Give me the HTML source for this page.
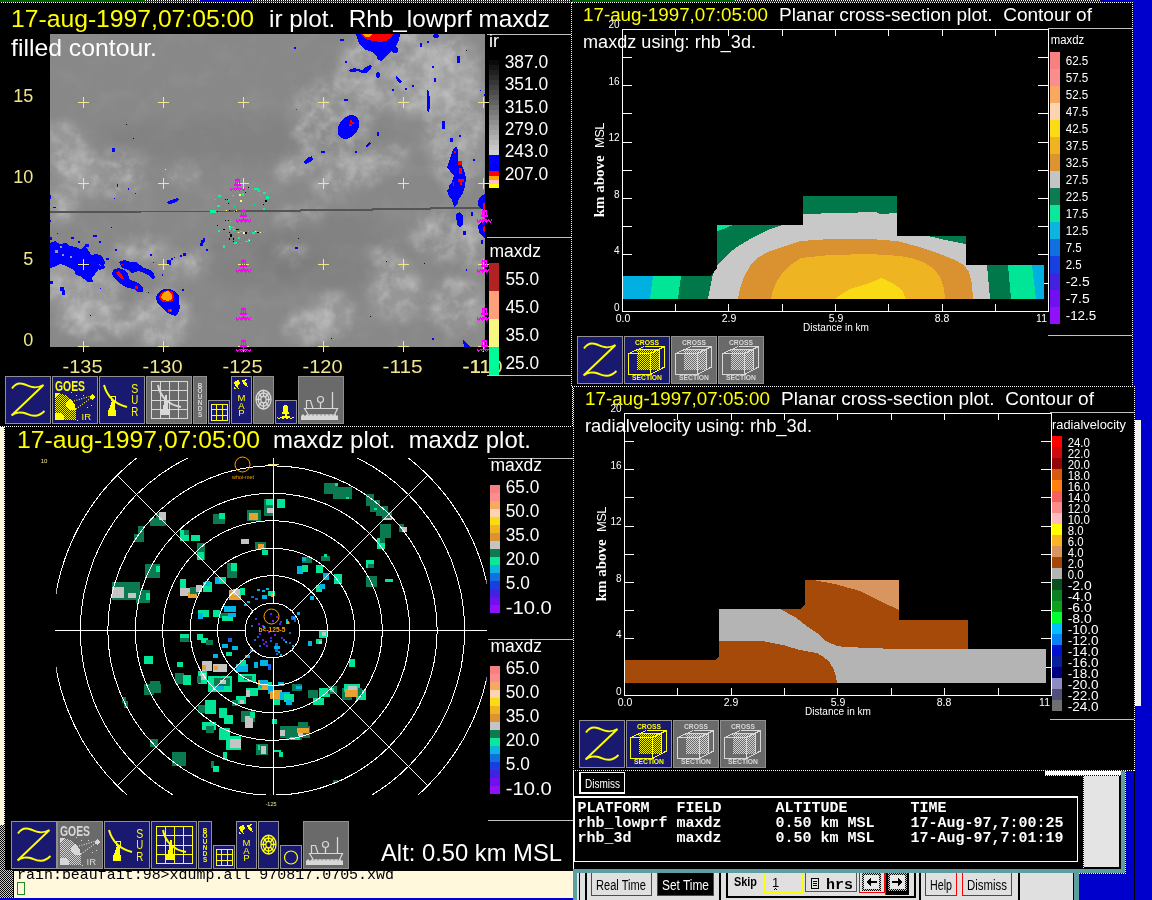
<!DOCTYPE html>
<html lang="en"><head><meta charset="utf-8"><title>zeb display 17-aug-1997</title>
<style>html,body{margin:0;padding:0;background:#000;overflow:hidden;width:1152px;height:900px}svg{display:block;will-change:transform}text{font-family:"Liberation Sans",sans-serif;white-space:pre}</style></head><body>
<svg width="1152" height="900" viewBox="0 0 1152 900" shape-rendering="crispEdges">
<defs>
<filter id="bl6" color-interpolation-filters="sRGB" filterUnits="userSpaceOnUse" x="0" y="0" width="600" height="400"><feGaussianBlur stdDeviation="6"/></filter>
<filter id="bl3" color-interpolation-filters="sRGB" x="-30%" y="-30%" width="160%" height="160%"><feGaussianBlur stdDeviation="3"/></filter>
<filter id="tex" x="0" y="0" width="100%" height="100%"><feTurbulence type="fractalNoise" baseFrequency="0.045" numOctaves="4" seed="11" result="n"/><feColorMatrix type="matrix" values="0 0 0 0 1  0 0 0 0 1  0 0 0 0 1  1.6 0 0 0 -0.62"/></filter>
<filter id="tex2" x="0" y="0" width="100%" height="100%"><feTurbulence type="fractalNoise" baseFrequency="0.09" numOctaves="3" seed="5" result="n"/><feColorMatrix type="matrix" values="0 0 0 0 1  0 0 0 0 1  0 0 0 0 1  2.2 0 0 0 -0.95"/></filter>
<clipPath id="cir"><rect x="50" y="34" width="435" height="313"/></clipPath>
<clipPath id="crad"><rect x="56.300" y="458" width="430.200" height="337"/></clipPath>
<pattern id="stip" width="2" height="2" patternUnits="userSpaceOnUse"><rect width="2" height="2" fill="#c8c8c8"/><rect width="1" height="1" fill="#000"/><rect x="1" y="1" width="1" height="1" fill="#000"/></pattern>
<pattern id="stipy" width="2" height="2" patternUnits="userSpaceOnUse"><rect width="1" height="1" fill="#ff0"/><rect x="1" y="1" width="1" height="1" fill="#ff0"/></pattern>
<pattern id="stipg" width="2" height="2" patternUnits="userSpaceOnUse"><rect width="1" height="1" fill="#d3d3d3"/><rect x="1" y="1" width="1" height="1" fill="#d3d3d3"/></pattern>
</defs>
<rect x="0" y="0" width="1152" height="900" fill="#000" />
<rect x="1133" y="0" width="19" height="386" fill="#0000cd" />
<rect x="1135" y="386" width="17" height="514" fill="#0000cd" />
<rect x="1101" y="0" width="51" height="3" fill="#0000cd" />
<rect x="0" y="0" width="571" height="2" fill="#006400" />
<rect x="145" y="0" width="426" height="1" fill="#000" />
<line x1="145" y1="0.5" x2="571" y2="0.5" stroke="#fff" stroke-width="1" stroke-dasharray="1 1"/>
<rect x="200" y="0" width="52" height="2" fill="#0000cd" />
<line x1="1" y1="2.5" x2="572" y2="2.5" stroke="#fff" stroke-width="1" stroke-dasharray="1 1"/>
<line x1="571.5" y1="3" x2="571.5" y2="386" stroke="#fff" stroke-width="1" stroke-dasharray="1 1"/>
<text x="11" y="27" font-size="24.5" fill="#ff0" textLength="243" lengthAdjust="spacingAndGlyphs" >17-aug-1997,07:05:00</text>
<text x="269" y="27" font-size="24.5" fill="#fff" textLength="281" lengthAdjust="spacingAndGlyphs" >ir plot.  Rhb_lowprf maxdz</text>
<rect x="50" y="34" width="435" height="313" fill="#888888" />
<g clip-path="url(#cir)">
<g filter="url(#bl6)" shape-rendering="auto">
<ellipse cx="260" cy="260" rx="60" ry="30" fill="#000" opacity="0.044" transform="rotate(0 260 260)"/>
<ellipse cx="240" cy="140" rx="150" ry="22" fill="#000" opacity="0.039" transform="rotate(0 240 140)"/>
<ellipse cx="305" cy="328" rx="22" ry="16" fill="#fff" opacity="0.121" transform="rotate(0 305 328)"/>
<ellipse cx="330" cy="250" rx="70" ry="40" fill="#000" opacity="0.044" transform="rotate(0 330 250)"/>
<ellipse cx="72" cy="160" rx="22" ry="40" fill="#fff" opacity="0.132" transform="rotate(-25 72 160)"/>
<ellipse cx="60" cy="205" rx="14" ry="20" fill="#fff" opacity="0.138" transform="rotate(0 60 205)"/>
<ellipse cx="120" cy="175" rx="25" ry="25" fill="#fff" opacity="0.083" transform="rotate(0 120 175)"/>
<ellipse cx="185" cy="175" rx="14" ry="14" fill="#fff" opacity="0.083" transform="rotate(0 185 175)"/>
<ellipse cx="80" cy="290" rx="40" ry="28" fill="#fff" opacity="0.132" transform="rotate(20 80 290)"/>
<ellipse cx="95" cy="320" rx="40" ry="20" fill="#fff" opacity="0.099" transform="rotate(0 95 320)"/>
<ellipse cx="160" cy="320" rx="28" ry="28" fill="#fff" opacity="0.165" transform="rotate(0 160 320)"/>
<ellipse cx="185" cy="265" rx="25" ry="12" fill="#fff" opacity="0.099" transform="rotate(-20 185 265)"/>
<ellipse cx="140" cy="250" rx="25" ry="14" fill="#fff" opacity="0.083" transform="rotate(0 140 250)"/>
<ellipse cx="410" cy="70" rx="70" ry="45" fill="#fff" opacity="0.121" transform="rotate(0 410 70)"/>
<ellipse cx="428" cy="85" rx="7" ry="35" fill="#fff" opacity="0.165" transform="rotate(5 428 85)"/>
<ellipse cx="330" cy="120" rx="40" ry="40" fill="#fff" opacity="0.077" transform="rotate(0 330 120)"/>
<ellipse cx="455" cy="120" rx="30" ry="70" fill="#fff" opacity="0.121" transform="rotate(0 455 120)"/>
<ellipse cx="360" cy="170" rx="50" ry="18" fill="#fff" opacity="0.099" transform="rotate(-25 360 170)"/>
<ellipse cx="300" cy="165" rx="25" ry="12" fill="#fff" opacity="0.138" transform="rotate(-25 300 165)"/>
<ellipse cx="395" cy="290" rx="25" ry="32" fill="#fff" opacity="0.121" transform="rotate(-20 395 290)"/>
<ellipse cx="455" cy="305" rx="28" ry="28" fill="#fff" opacity="0.099" transform="rotate(0 455 305)"/>
<ellipse cx="330" cy="315" rx="25" ry="22" fill="#fff" opacity="0.121" transform="rotate(0 330 315)"/>
<ellipse cx="385" cy="255" rx="14" ry="10" fill="#fff" opacity="0.138" transform="rotate(0 385 255)"/>
<ellipse cx="300" cy="215" rx="25" ry="8" fill="#fff" opacity="0.110" transform="rotate(-15 300 215)"/>
<ellipse cx="290" cy="252" rx="18" ry="8" fill="#fff" opacity="0.110" transform="rotate(0 290 252)"/>
<ellipse cx="440" cy="235" rx="30" ry="25" fill="#fff" opacity="0.066" transform="rotate(0 440 235)"/>
<ellipse cx="470" cy="240" rx="15" ry="30" fill="#fff" opacity="0.083" transform="rotate(0 470 240)"/>
</g>
<mask id="mcl" maskUnits="userSpaceOnUse" x="50" y="34" width="435" height="313"><rect x="50" y="34" width="435" height="313" fill="#000"/><g filter="url(#bl6)" shape-rendering="auto">
<ellipse cx="305" cy="328" rx="22" ry="16" fill="#fff" transform="rotate(0 305 328)"/>
<ellipse cx="72" cy="160" rx="22" ry="40" fill="#fff" transform="rotate(-25 72 160)"/>
<ellipse cx="60" cy="205" rx="14" ry="20" fill="#fff" transform="rotate(0 60 205)"/>
<ellipse cx="120" cy="175" rx="25" ry="25" fill="#fff" transform="rotate(0 120 175)"/>
<ellipse cx="185" cy="175" rx="14" ry="14" fill="#fff" transform="rotate(0 185 175)"/>
<ellipse cx="80" cy="290" rx="40" ry="28" fill="#fff" transform="rotate(20 80 290)"/>
<ellipse cx="95" cy="320" rx="40" ry="20" fill="#fff" transform="rotate(0 95 320)"/>
<ellipse cx="160" cy="320" rx="28" ry="28" fill="#fff" transform="rotate(0 160 320)"/>
<ellipse cx="185" cy="265" rx="25" ry="12" fill="#fff" transform="rotate(-20 185 265)"/>
<ellipse cx="140" cy="250" rx="25" ry="14" fill="#fff" transform="rotate(0 140 250)"/>
<ellipse cx="410" cy="70" rx="70" ry="45" fill="#fff" transform="rotate(0 410 70)"/>
<ellipse cx="428" cy="85" rx="7" ry="35" fill="#fff" transform="rotate(5 428 85)"/>
<ellipse cx="330" cy="120" rx="40" ry="40" fill="#fff" transform="rotate(0 330 120)"/>
<ellipse cx="455" cy="120" rx="30" ry="70" fill="#fff" transform="rotate(0 455 120)"/>
<ellipse cx="360" cy="170" rx="50" ry="18" fill="#fff" transform="rotate(-25 360 170)"/>
<ellipse cx="300" cy="165" rx="25" ry="12" fill="#fff" transform="rotate(-25 300 165)"/>
<ellipse cx="395" cy="290" rx="25" ry="32" fill="#fff" transform="rotate(-20 395 290)"/>
<ellipse cx="455" cy="305" rx="28" ry="28" fill="#fff" transform="rotate(0 455 305)"/>
<ellipse cx="330" cy="315" rx="25" ry="22" fill="#fff" transform="rotate(0 330 315)"/>
<ellipse cx="385" cy="255" rx="14" ry="10" fill="#fff" transform="rotate(0 385 255)"/>
<ellipse cx="300" cy="215" rx="25" ry="8" fill="#fff" transform="rotate(-15 300 215)"/>
<ellipse cx="290" cy="252" rx="18" ry="8" fill="#fff" transform="rotate(0 290 252)"/>
<ellipse cx="440" cy="235" rx="30" ry="25" fill="#fff" transform="rotate(0 440 235)"/>
<ellipse cx="470" cy="240" rx="15" ry="30" fill="#fff" transform="rotate(0 470 240)"/>
</g></mask>
<g mask="url(#mcl)" shape-rendering="auto"><rect x="50" y="34" width="435" height="313" fill="#fff" filter="url(#tex)" opacity="0.28"/>
<rect x="50" y="34" width="435" height="313" fill="#fff" filter="url(#tex2)" opacity="0.22"/></g>
<rect x="50" y="34" width="435" height="313" fill="#fff" filter="url(#tex)" opacity="0.06"/>
<polyline points="50,212 140,212 141,211.500 230,211.500 231,211 300,211 301,210 372,210 373,209 430,209 431,208 485,208" fill="none" stroke="#555555" stroke-width="1.500"/>
<polygon points="356,34 400,34 399,40 396,46 392,50 388,54 384,58 381,61 378,60 376,55 372,52 366,50 361,46 358,41" fill="#0000ff"/>
<polygon points="361,34 393,34 391,38 386,41 380,42 374,41 368,40 364,38" fill="#ff0000"/>
<polygon points="363,34 372,34 370,37 365,37" fill="#ffa500"/>
<ellipse cx="395" cy="50" rx="3" ry="3" fill="#0000ff" transform="rotate(0 395 50)"/>
<ellipse cx="342" cy="40" rx="2" ry="1.5" fill="#0000ff" transform="rotate(0 342 40)"/>
<ellipse cx="295" cy="48" rx="1" ry="1" fill="#0000ff" transform="rotate(0 295 48)"/>
<ellipse cx="346" cy="62" rx="1.5" ry="1" fill="#0000ff" transform="rotate(0 346 62)"/>
<polygon points="349,70 354,68 358,69 362,70 366,67 370,65 372,66 370,70 366,73 362,73 358,71 353,72 350,72" fill="#0000ff"/>
<ellipse cx="378" cy="75" rx="2" ry="3" fill="#0000ff" transform="rotate(0 378 75)"/>
<polygon points="396,76 399,78 402,82 400,83 397,81" fill="#0000ff"/>
<ellipse cx="393" cy="90" rx="1" ry="1" fill="#0000ff" transform="rotate(0 393 90)"/>
<ellipse cx="406" cy="89" rx="1.5" ry="1" fill="#0000ff" transform="rotate(0 406 89)"/>
<ellipse cx="413" cy="86" rx="1.5" ry="1" fill="#0000ff" transform="rotate(0 413 86)"/>
<ellipse cx="346" cy="100" rx="2" ry="1" fill="#0000ff" transform="rotate(0 346 100)"/>
<polygon points="427,90 429,92 430,100 430,108 428,113 427,108 427,100" fill="#0000ff"/>
<ellipse cx="436" cy="36" rx="3" ry="2" fill="#0000ff" transform="rotate(0 436 36)"/>
<ellipse cx="421" cy="45" rx="1.5" ry="2" fill="#0000ff" transform="rotate(0 421 45)"/>
<ellipse cx="428" cy="42" rx="1.5" ry="1.5" fill="#0000ff" transform="rotate(0 428 42)"/>
<ellipse cx="433" cy="67" rx="1.5" ry="1.5" fill="#0000ff" transform="rotate(0 433 67)"/>
<ellipse cx="435" cy="80" rx="1" ry="2" fill="#0000ff" transform="rotate(0 435 80)"/>
<rect x="457" y="56" width="3" height="7" fill="#0000ff" />
<rect x="480" y="90" width="1" height="1" fill="#0000ff" />
<rect x="484" y="94" width="1" height="2" fill="#0000ff" />
<ellipse cx="348.5" cy="127" rx="9.5" ry="13" fill="#0000ff" transform="rotate(35 348.5 127)"/>
<rect x="350" y="120" width="2" height="3" fill="#ff0000" />
<rect x="352" y="122" width="2" height="2" fill="#ff0000" />
<rect x="349" y="124" width="3" height="2" fill="#ff0000" />
<polygon points="365,146 370,142 371,144 367,147" fill="#0000ff"/>
<ellipse cx="378" cy="134" rx="1" ry="2" fill="#0000ff" transform="rotate(0 378 134)"/>
<polygon points="303,162 307,158 312,156 313,159 310,162 306,164" fill="#0000ff"/>
<ellipse cx="323" cy="152" rx="2" ry="1.5" fill="#0000ff" transform="rotate(0 323 152)"/>
<ellipse cx="356" cy="152" rx="1" ry="1.5" fill="#0000ff" transform="rotate(0 356 152)"/>
<rect x="442" y="121" width="3" height="8" fill="#0000ff" />
<rect x="450" y="138" width="3" height="4" fill="#0000ff" />
<rect x="459" y="135" width="2" height="2" fill="#0000ff" />
<rect x="473" y="159" width="2" height="2" fill="#0000ff" />
<polygon points="453,149 456,146 458,150 458,160 461,164 464,170 466,178 465,186 463,193 460,198 457,200 452,198 448,193 449,186 452,182 454,176 450,171 447,168 449,162 451,156" fill="#0000ff"/>
<rect x="454" y="151" width="2" height="2" fill="#ff0000" />
<rect x="458" y="161" width="4" height="4" fill="#ff0000" />
<rect x="459" y="168" width="3" height="6" fill="#ff0000" />
<rect x="458" y="179" width="6" height="3" fill="#ff0000" />
<rect x="460" y="182" width="2" height="3" fill="#ff0000" />
<rect x="453" y="182" width="1" height="4" fill="#ff0000" />
<polygon points="447,190 452,189 456,193 459,197 458,204 454,207 452,200 449,196" fill="#0000ff"/>
<polygon points="456,214 460,212 463,216 463,224 460,228 457,225" fill="#0000ff"/>
<rect x="463" y="231" width="3" height="4" fill="#0000ff" />
<rect x="471" y="212" width="2" height="4" fill="#0000ff" />
<polygon points="485,194 481,196 478,201 478,206 481,209 485,210" fill="#0000ff"/>
<polygon points="485,220 481,222 478,226 479,232 482,236 485,238" fill="#0000ff"/>
<rect x="481" y="240" width="2" height="4" fill="#0000ff" />
<ellipse cx="484.5" cy="206" rx="2" ry="3.5" fill="#ff0000" transform="rotate(0 484.5 206)"/>
<ellipse cx="485" cy="229" rx="2" ry="3" fill="#ff0000" transform="rotate(0 485 229)"/>
<polygon points="463,340 466,342 470,347 464,347" fill="#0000ff"/>
<rect x="432" y="338" width="2" height="2" fill="#0000ff" />
<rect x="466" y="269" width="1" height="2" fill="#0000ff" />
<rect x="295" y="247" width="3" height="2" fill="#0000ff" />
<polygon points="166,203 171,200 177,198 179,199 176,202 170,204" fill="#0000ff"/>
<rect x="112" y="148" width="3" height="4" fill="#0000ff" />
<rect x="117" y="184" width="1" height="3" fill="#0000ff" />
<rect x="128" y="188" width="1" height="2" fill="#0000ff" />
<rect x="135" y="193" width="1" height="1" fill="#0000ff" />
<rect x="114" y="198" width="1" height="1" fill="#0000ff" />
<rect x="54" y="207" width="2" height="1" fill="#0000ff" />
<rect x="50" y="195" width="1" height="4" fill="#0000ff" />
<polygon points="50,243 55,241 60,244 66,243 70,246 76,247 82,250 88,254 90,258 92,262 96,265 98,270 95,274 92,277 93,282 88,282 84,279 80,276 76,275 74,270 70,268 66,266 60,264 56,266 50,268" fill="#0000ff"/>
<polygon points="80,250 84,246 88,250 92,256 96,262 100,266 104,264 105,268 100,270 94,268 88,260" fill="#0000ff"/>
<polygon points="88,256 96,254 102,256 105,262 104,266 98,264 92,262" fill="#0000ff"/>
<rect x="71" y="237" width="3" height="2" fill="#0000ff" />
<rect x="78" y="241" width="2" height="2" fill="#0000ff" />
<rect x="85" y="244" width="4" height="3" fill="#0000ff" />
<rect x="93" y="235" width="4" height="2" fill="#0000ff" />
<rect x="99" y="241" width="2" height="2" fill="#0000ff" />
<rect x="50" y="237" width="2" height="3" fill="#0000ff" />
<rect x="60" y="287" width="4" height="4" fill="#0000ff" />
<rect x="50" y="281" width="3" height="3" fill="#0000ff" />
<rect x="62" y="290" width="3" height="5" fill="#0000ff" />
<rect x="106" y="258" width="3" height="2" fill="#0000ff" />
<rect x="50" y="220" width="1" height="2" fill="#0000ff" />
<rect x="53" y="207" width="2" height="1" fill="#0000ff" />
<rect x="57" y="233" width="1" height="1" fill="#0000ff" />
<rect x="100" y="288" width="1" height="1" fill="#0000ff" />
<rect x="55" y="250" width="3" height="3" fill="#9a9a9a" />
<rect x="62" y="254" width="2" height="2" fill="#9a9a9a" />
<rect x="70" y="256" width="2" height="2" fill="#9a9a9a" />
<rect x="60" y="246" width="2" height="2" fill="#9a9a9a" />
<polygon points="119,262 124,260 130,262 136,262 140,265 144,268 150,270 154,274 155,278 152,279 148,275 144,273 138,271 132,273 128,270 122,268" fill="#0000ff"/>
<polygon points="113,270 118,268 124,270 128,274 130,280 136,282 140,284 143,288 143,292 138,292 134,289 128,288 124,286 118,282 114,278 112,274" fill="#0000ff"/>
<polygon points="116,272 119,271 122,275 124,279 121,279 118,276" fill="#ff0000"/>
<rect x="135" y="286" width="3" height="3" fill="#ff0000" />
<rect x="121" y="264" width="2" height="1" fill="#ff0000" />
<polygon points="156,297 159,292 164,289 170,289 176,292 179,296 179,302 180,308 178,313 176,316 172,315 168,313 164,310 160,306 157,302" fill="#0000ff"/>
<polygon points="159,297 162,292 168,290 173,292 174,297 172,302 167,302 162,302" fill="#ff0000"/>
<polygon points="161,297 164,292 168,291 172,294 172,299 168,301 163,300" fill="#ffa500"/>
<rect x="168" y="309" width="4" height="3" fill="#ff0000" />
<rect x="170" y="310" width="1" height="1" fill="#ffa500" />
<rect x="182" y="289" width="2" height="2" fill="#0000ff" />
<rect x="201" y="240" width="3" height="3" fill="#0000ff" />
<rect x="203" y="238" width="2" height="4" fill="#0000ff" />
<rect x="200" y="243" width="3" height="3" fill="#0000ff" />
<rect x="206" y="249" width="2" height="2" fill="#0000ff" />
<rect x="183" y="253" width="3" height="3" fill="#0000ff" />
<rect x="180" y="255" width="2" height="2" fill="#0000ff" />
<rect x="167" y="260" width="4" height="5" fill="#0000ff" />
<rect x="171" y="258" width="2" height="2" fill="#0000ff" />
<rect x="150" y="254" width="2" height="2" fill="#0000ff" />
<rect x="153" y="262" width="1" height="1" fill="#0000ff" />
<rect x="162" y="274" width="1" height="2" fill="#0000ff" />
<rect x="115" y="249" width="2" height="2" fill="#0000ff" />
<rect x="174" y="257" width="1" height="1" fill="#0000ff" />
<rect x="126" y="124" width="1" height="1" fill="#111" />
<rect x="133" y="138" width="1" height="1" fill="#111" />
<rect x="90" y="315" width="1" height="1" fill="#111" />
<rect x="148" y="292" width="1" height="1" fill="#111" />
<rect x="111" y="227" width="1" height="1" fill="#111" />
<rect x="466" y="50" width="1" height="1" fill="#111" />
<rect x="386" y="261" width="1" height="1" fill="#111" />
<rect x="424" y="263" width="1" height="1" fill="#111" />
<rect x="370" y="316" width="1" height="1" fill="#111" />
<rect x="331" y="338" width="1" height="1" fill="#111" />
<rect x="298" y="238" width="1" height="1" fill="#111" />
<rect x="296" y="109" width="1" height="1" fill="#ff0000" />
<rect x="165" y="169" width="1" height="1" fill="#ff0" />
<rect x="218" y="195" width="3" height="2" fill="#00fa9a" />
<rect x="232" y="195" width="2" height="1" fill="#00fa9a" />
<rect x="242" y="193" width="2" height="3" fill="#00fa9a" />
<rect x="239" y="194" width="2" height="2" fill="#00fa9a" />
<rect x="215" y="199" width="1" height="1" fill="#00fa9a" />
<rect x="217" y="205" width="3" height="2" fill="#00fa9a" />
<rect x="210" y="210" width="6" height="3" fill="#00fa9a" />
<rect x="225" y="210" width="2" height="1" fill="#00fa9a" />
<rect x="234" y="211" width="2" height="1" fill="#00fa9a" />
<rect x="254" y="188" width="5" height="2" fill="#00fa9a" />
<rect x="258" y="190" width="2" height="2" fill="#00fa9a" />
<rect x="263" y="192" width="3" height="2" fill="#00fa9a" />
<rect x="266" y="196" width="3" height="3" fill="#00fa9a" />
<rect x="270" y="197" width="1" height="1" fill="#00fa9a" />
<rect x="254" y="204" width="1" height="1" fill="#00fa9a" />
<rect x="263" y="208" width="2" height="2" fill="#00fa9a" />
<rect x="234" y="206" width="1" height="1" fill="#00fa9a" />
<rect x="228" y="199" width="1" height="2" fill="#00fa9a" />
<rect x="230" y="221" width="1" height="1" fill="#00fa9a" />
<rect x="229" y="226" width="2" height="4" fill="#00fa9a" />
<rect x="231" y="227" width="3" height="1" fill="#00fa9a" />
<rect x="233" y="229" width="2" height="2" fill="#00fa9a" />
<rect x="218" y="230" width="2" height="2" fill="#00fa9a" />
<rect x="237" y="232" width="3" height="1" fill="#00fa9a" />
<rect x="240" y="231" width="3" height="1" fill="#00fa9a" />
<rect x="248" y="231" width="1" height="1" fill="#00fa9a" />
<rect x="252" y="232" width="3" height="2" fill="#00fa9a" />
<rect x="256" y="231" width="2" height="1" fill="#00fa9a" />
<rect x="259" y="232" width="2" height="1" fill="#00fa9a" />
<rect x="238" y="237" width="2" height="2" fill="#00fa9a" />
<rect x="245" y="241" width="4" height="1" fill="#00fa9a" />
<rect x="248" y="239" width="2" height="2" fill="#00fa9a" />
<rect x="234" y="242" width="3" height="2" fill="#00fa9a" />
<rect x="223" y="245" width="2" height="3" fill="#00fa9a" />
<rect x="241" y="243" width="1" height="1" fill="#00fa9a" />
<rect x="228" y="235" width="1" height="1" fill="#00fa9a" />
<rect x="260" y="195" width="1" height="1" fill="#00fa9a" />
<rect x="225" y="199" width="1" height="1" fill="#000" />
<rect x="227" y="199" width="1" height="1" fill="#000" />
<rect x="228" y="203" width="1" height="1" fill="#000" />
<rect x="217" y="211" width="1" height="1" fill="#000" />
<rect x="229" y="210" width="1" height="1" fill="#000" />
<rect x="235" y="211" width="1" height="1" fill="#000" />
<rect x="245" y="192" width="1" height="1" fill="#000" />
<rect x="265" y="200" width="2" height="2" fill="#000" />
<rect x="263" y="204" width="1" height="1" fill="#000" />
<rect x="225" y="220" width="1" height="1" fill="#000" />
<rect x="228" y="220" width="1" height="1" fill="#000" />
<rect x="217" y="225" width="1" height="1" fill="#000" />
<rect x="223" y="229" width="2" height="1" fill="#000" />
<rect x="236" y="229" width="3" height="1" fill="#000" />
<rect x="245" y="232" width="2" height="2" fill="#000" />
<rect x="257" y="232" width="2" height="1" fill="#000" />
<rect x="229" y="232" width="1" height="1" fill="#000" />
<rect x="230" y="234" width="2" height="3" fill="#000" />
<rect x="233" y="238" width="1" height="2" fill="#000" />
<rect x="229" y="238" width="1" height="2" fill="#000" />
<rect x="233" y="241" width="1" height="1" fill="#000" />
<rect x="248" y="187" width="1" height="1" fill="#000" />
<rect x="239" y="194" width="2" height="2" fill="#ff6" />
<rect x="240" y="200" width="2" height="2" fill="#ff6" />
<rect x="226" y="210" width="1" height="1" fill="#ff6" />
<rect x="236" y="210" width="1" height="1" fill="#ff6" />
<rect x="229" y="226" width="1" height="1" fill="#ff6" />
<rect x="243" y="232" width="2" height="2" fill="#ff6" />
<rect x="238" y="232" width="1" height="1" fill="#ff6" />
<rect x="255" y="231" width="1" height="1" fill="#ff6" />
<rect x="260" y="232" width="1" height="1" fill="#ff6" />
<rect x="249" y="240" width="1" height="1" fill="#ff6" />
</g>
<path d="M78 346.5h11M83.5 341v11" stroke="#f0e68c" stroke-width="1" fill="none"/>
<path d="M78 264.5h11M83.5 259v11" stroke="#f0e68c" stroke-width="1" fill="none"/>
<path d="M78 183.5h11M83.5 178v11" stroke="#f0e68c" stroke-width="1" fill="none"/>
<path d="M78 102.5h11M83.5 97v11" stroke="#f0e68c" stroke-width="1" fill="none"/>
<path d="M158 346.5h11M163.5 341v11" stroke="#f0e68c" stroke-width="1" fill="none"/>
<path d="M158 264.5h11M163.5 259v11" stroke="#f0e68c" stroke-width="1" fill="none"/>
<path d="M158 183.5h11M163.5 178v11" stroke="#f0e68c" stroke-width="1" fill="none"/>
<path d="M158 102.5h11M163.5 97v11" stroke="#f0e68c" stroke-width="1" fill="none"/>
<path d="M238 346.5h11M243.5 341v11" stroke="#f0e68c" stroke-width="1" fill="none"/>
<path d="M238 264.5h11M243.5 259v11" stroke="#f0e68c" stroke-width="1" fill="none"/>
<path d="M238 183.5h11M243.5 178v11" stroke="#f0e68c" stroke-width="1" fill="none"/>
<path d="M238 102.5h11M243.5 97v11" stroke="#f0e68c" stroke-width="1" fill="none"/>
<path d="M318 346.5h11M323.5 341v11" stroke="#f0e68c" stroke-width="1" fill="none"/>
<path d="M318 264.5h11M323.5 259v11" stroke="#f0e68c" stroke-width="1" fill="none"/>
<path d="M318 183.5h11M323.5 178v11" stroke="#f0e68c" stroke-width="1" fill="none"/>
<path d="M318 102.5h11M323.5 97v11" stroke="#f0e68c" stroke-width="1" fill="none"/>
<path d="M398 346.5h11M403.5 341v11" stroke="#f0e68c" stroke-width="1" fill="none"/>
<path d="M398 264.5h11M403.5 259v11" stroke="#f0e68c" stroke-width="1" fill="none"/>
<path d="M398 183.5h11M403.5 178v11" stroke="#f0e68c" stroke-width="1" fill="none"/>
<path d="M398 102.5h11M403.5 97v11" stroke="#f0e68c" stroke-width="1" fill="none"/>
<path d="M478 346.5h11M483.5 341v11" stroke="#f0e68c" stroke-width="1" fill="none"/>
<path d="M478 264.5h11M483.5 259v11" stroke="#f0e68c" stroke-width="1" fill="none"/>
<path d="M478 183.5h11M483.5 178v11" stroke="#f0e68c" stroke-width="1" fill="none"/>
<path d="M478 102.5h11M483.5 97v11" stroke="#f0e68c" stroke-width="1" fill="none"/>
<symbol id="buoy" viewBox="0 0 16 14" width="16" height="14"><path d="M7.500 0h1v1h2v5h1v2h-3v2h2l1 1.500h-7l1-1.500h2v-2h-3V6h1V1h2z M6.500 3v3h1V3z M8.500 3v3h1V3z" fill="#ff00ff" fill-rule="evenodd"/><path d="M0.500 10.500l1.500 2.500 2-2 2 2 2-2 2 2 2-2 2 2 1.500-2.500" stroke="#ff00ff" stroke-width="1.200" fill="none"/></symbol>
<use href="#buoy" x="229.5" y="177.5"/>
<use href="#buoy" x="235.5" y="209"/>
<use href="#buoy" x="235.5" y="259"/>
<use href="#buoy" x="235.5" y="307"/>
<use href="#buoy" x="235.5" y="338.5"/>
<use href="#buoy" x="476.5" y="209"/>
<use href="#buoy" x="476.5" y="259"/>
<use href="#buoy" x="476.5" y="307"/>
<use href="#buoy" x="476.5" y="338.5"/>
<text x="33.3" y="346.3" font-size="18" fill="#f0e68c" text-anchor="end" >0</text>
<text x="33.3" y="264.8" font-size="18" fill="#f0e68c" text-anchor="end" >5</text>
<text x="33.3" y="183.3" font-size="18" fill="#f0e68c" text-anchor="end" >10</text>
<text x="33.3" y="101.8" font-size="18" fill="#f0e68c" text-anchor="end" >15</text>
<text x="82.5" y="372.5" font-size="18" fill="#f0e68c" text-anchor="middle" textLength="40" lengthAdjust="spacingAndGlyphs" >-135</text>
<text x="162.5" y="372.5" font-size="18" fill="#f0e68c" text-anchor="middle" textLength="40" lengthAdjust="spacingAndGlyphs" >-130</text>
<text x="242.5" y="372.5" font-size="18" fill="#f0e68c" text-anchor="middle" textLength="40" lengthAdjust="spacingAndGlyphs" >-125</text>
<text x="322.5" y="372.5" font-size="18" fill="#f0e68c" text-anchor="middle" textLength="40" lengthAdjust="spacingAndGlyphs" >-120</text>
<text x="402.5" y="372.5" font-size="18" fill="#f0e68c" text-anchor="middle" textLength="40" lengthAdjust="spacingAndGlyphs" >-115</text>
<text x="482.5" y="372.5" font-size="18" fill="#f0e68c" text-anchor="middle" textLength="40" lengthAdjust="spacingAndGlyphs" >-110</text>
<rect x="485" y="30" width="86" height="350" fill="#000" />
<text x="482.5" y="372.5" font-size="18" fill="#f0e68c" text-anchor="middle" textLength="40" lengthAdjust="spacingAndGlyphs" >-110</text>
<rect x="504" y="340" width="67" height="40" fill="#000" />
<path d="M478 346.5h11M483.500 341v11" stroke="#f0e68c" stroke-width="1" fill="none"/>
<path d="M478 264.5h11M483.500 259v11" stroke="#f0e68c" stroke-width="1" fill="none"/>
<path d="M478 183.5h11M483.500 178v11" stroke="#f0e68c" stroke-width="1" fill="none"/>
<path d="M478 102.5h11M483.500 97v11" stroke="#f0e68c" stroke-width="1" fill="none"/>
<use href="#buoy" x="476.5" y="209"/>
<use href="#buoy" x="476.5" y="259"/>
<use href="#buoy" x="476.5" y="307"/>
<use href="#buoy" x="476.5" y="338.5"/>
<line x1="487" y1="34.5" x2="571" y2="34.5" stroke="#c0c0c0" stroke-width="1" />
<text x="489" y="46.8" font-size="18" fill="#fff" >ir</text>
<linearGradient id="gir" x1="0" y1="0" x2="0" y2="1"><stop offset="0" stop-color="#000"/><stop offset="1" stop-color="#d2d2d2"/></linearGradient>
<rect x="489" y="60" width="10" height="5" fill="rgb(10,10,10)" />
<rect x="489" y="65" width="10" height="5" fill="rgb(21,21,21)" />
<rect x="489" y="70" width="10" height="5" fill="rgb(32,32,32)" />
<rect x="489" y="75" width="10" height="5" fill="rgb(43,43,43)" />
<rect x="489" y="80" width="10" height="5" fill="rgb(54,54,54)" />
<rect x="489" y="85" width="10" height="5" fill="rgb(65,65,65)" />
<rect x="489" y="90" width="10" height="5" fill="rgb(76,76,76)" />
<rect x="489" y="95" width="10" height="5" fill="rgb(87,87,87)" />
<rect x="489" y="100" width="10" height="5" fill="rgb(98,98,98)" />
<rect x="489" y="105" width="10" height="5" fill="rgb(110,110,110)" />
<rect x="489" y="110" width="10" height="5" fill="rgb(121,121,121)" />
<rect x="489" y="115" width="10" height="5" fill="rgb(132,132,132)" />
<rect x="489" y="120" width="10" height="5" fill="rgb(143,143,143)" />
<rect x="489" y="125" width="10" height="5" fill="rgb(154,154,154)" />
<rect x="489" y="130" width="10" height="5" fill="rgb(165,165,165)" />
<rect x="489" y="135" width="10" height="5" fill="rgb(176,176,176)" />
<rect x="489" y="140" width="10" height="5" fill="rgb(187,187,187)" />
<rect x="489" y="145" width="10" height="5" fill="rgb(198,198,198)" />
<rect x="489" y="150" width="10" height="5" fill="rgb(210,210,210)" />
<rect x="489" y="155" width="10" height="16" fill="#0000ff" />
<rect x="489" y="171" width="10" height="5" fill="#ff0000" />
<rect x="489" y="176" width="10" height="4" fill="#ffa500" />
<rect x="489" y="180" width="10" height="4" fill="#ffc0cb" />
<rect x="489" y="184" width="10" height="4" fill="#ffff00" />
<text x="504.7" y="68" font-size="18" fill="#fff" textLength="43.5" lengthAdjust="spacingAndGlyphs" >387.0</text>
<text x="504.7" y="90.3" font-size="18" fill="#fff" textLength="43.5" lengthAdjust="spacingAndGlyphs" >351.0</text>
<text x="504.7" y="112.6" font-size="18" fill="#fff" textLength="43.5" lengthAdjust="spacingAndGlyphs" >315.0</text>
<text x="504.7" y="134.9" font-size="18" fill="#fff" textLength="43.5" lengthAdjust="spacingAndGlyphs" >279.0</text>
<text x="504.7" y="157.2" font-size="18" fill="#fff" textLength="43.5" lengthAdjust="spacingAndGlyphs" >243.0</text>
<text x="504.7" y="179.5" font-size="18" fill="#fff" textLength="43.5" lengthAdjust="spacingAndGlyphs" >207.0</text>
<line x1="487" y1="237.5" x2="571" y2="237.5" stroke="#c0c0c0" stroke-width="1" />
<text x="489.5" y="257" font-size="18" fill="#fff" textLength="51.5" lengthAdjust="spacingAndGlyphs" >maxdz</text>
<rect x="489" y="263" width="10" height="28" fill="#b22222" />
<rect x="489" y="291" width="10" height="28" fill="#ffa07a" />
<rect x="489" y="319" width="10" height="28" fill="#f7f781" />
<rect x="489" y="347" width="10" height="28" fill="#00fa9a" />
<text x="505.5" y="284.5" font-size="18" fill="#fff" textLength="33.5" lengthAdjust="spacingAndGlyphs" >55.0</text>
<text x="505.5" y="312.5" font-size="18" fill="#fff" textLength="33.5" lengthAdjust="spacingAndGlyphs" >45.0</text>
<text x="505.5" y="340.5" font-size="18" fill="#fff" textLength="33.5" lengthAdjust="spacingAndGlyphs" >35.0</text>
<text x="505.5" y="368.5" font-size="18" fill="#fff" textLength="33.5" lengthAdjust="spacingAndGlyphs" >25.0</text>
<line x1="487" y1="375.5" x2="571" y2="375.5" stroke="#c0c0c0" stroke-width="1" />
<text x="11" y="56" font-size="24.5" fill="#fff" textLength="146" lengthAdjust="spacingAndGlyphs" >filled contour.</text>
<line x1="0" y1="426.5" x2="571" y2="426.5" stroke="#fff" stroke-width="1" stroke-dasharray="1 1"/>
<rect x="0" y="427" width="4" height="398" fill="#fff8dc" />
<line x1="4.5" y1="427" x2="4.5" y2="870" stroke="#fff" stroke-width="1" stroke-dasharray="1 1"/>
<rect x="0" y="825" width="5" height="75" fill="url(#stip)" />
<text x="17" y="447.5" font-size="24.5" fill="#ff0" textLength="243" lengthAdjust="spacingAndGlyphs" >17-aug-1997,07:05:00</text>
<text x="273" y="447.5" font-size="24.5" fill="#fff" textLength="258" lengthAdjust="spacingAndGlyphs" >maxdz plot.  maxdz plot.</text>
<g clip-path="url(#crad)">
<rect x="156" y="513" width="10" height="13" fill="#0b7a50" />
<rect x="159" y="512" width="7" height="8" fill="#c4c4c4" />
<rect x="150" y="518" width="8" height="8" fill="#0b7a50" />
<rect x="138" y="526" width="6" height="16" fill="#0b7a50" />
<rect x="134" y="534" width="6" height="8" fill="#0b7a50" />
<rect x="145" y="564" width="15" height="14" fill="#0b7a50" />
<rect x="156" y="566" width="4" height="6" fill="#00e696" />
<rect x="112" y="582" width="28" height="18" fill="#0b7a50" />
<rect x="112" y="587" width="12" height="11" fill="#c4c4c4" />
<rect x="128" y="593" width="9" height="5" fill="#c4c4c4" />
<rect x="136" y="590" width="14" height="13" fill="#0b7a50" />
<rect x="146" y="593" width="4" height="7" fill="#00e696" />
<rect x="180" y="530" width="9" height="11" fill="#00e696" />
<rect x="184" y="530" width="5" height="5" fill="#0b7a50" />
<rect x="191" y="535" width="9" height="6" fill="#00e696" />
<rect x="197" y="543" width="8" height="17" fill="#0b7a50" />
<rect x="197" y="552" width="7" height="8" fill="#00e696" />
<rect x="213" y="514" width="12" height="10" fill="#0b7a50" />
<rect x="219" y="513" width="6" height="6" fill="#00e696" />
<rect x="247" y="510" width="14" height="11" fill="#0b7a50" />
<rect x="249" y="513" width="9" height="7" fill="#e8a030" />
<rect x="264" y="499" width="9" height="17" fill="#0b7a50" />
<rect x="266" y="499" width="7" height="6" fill="#00e696" />
<rect x="267" y="508" width="6" height="5" fill="#c4c4c4" />
<rect x="277" y="499" width="8" height="9" fill="#00e696" />
<rect x="241" y="539" width="8" height="5" fill="#c4c4c4" />
<rect x="255" y="542" width="11" height="8" fill="#0b7a50" />
<rect x="258" y="544" width="6" height="5" fill="#e8a030" />
<rect x="262" y="550" width="6" height="5" fill="#00e696" />
<rect x="227" y="563" width="10" height="15" fill="#0b7a50" />
<rect x="231" y="563" width="6" height="8" fill="#00e696" />
<rect x="180" y="579" width="6" height="17" fill="#00e696" />
<rect x="180" y="588" width="12" height="8" fill="#c4c4c4" />
<rect x="188" y="592" width="9" height="6" fill="#e8a030" />
<rect x="190" y="587" width="10" height="7" fill="#0b7a50" />
<rect x="196" y="585" width="6" height="7" fill="#c4c4c4" />
<rect x="203" y="582" width="9" height="10" fill="#00e696" />
<rect x="205" y="581" width="5" height="5" fill="#00b4e6" />
<rect x="215" y="577" width="11" height="7" fill="#00b4e6" />
<rect x="219" y="577" width="7" height="6" fill="#00e696" />
<rect x="229" y="590" width="12" height="10" fill="#e8a030" />
<rect x="233" y="589" width="7" height="6" fill="#c4c4c4" />
<rect x="240" y="588" width="5" height="7" fill="#00e696" />
<rect x="198" y="610" width="11" height="7" fill="#00e696" />
<rect x="198" y="613" width="5" height="6" fill="#00b4e6" />
<rect x="213" y="610" width="7" height="7" fill="#00e696" />
<rect x="220" y="613" width="8" height="5" fill="#0b7a50" />
<rect x="224" y="606" width="12" height="6" fill="#00b4e6" />
<rect x="222" y="616" width="11" height="5" fill="#00e696" />
<rect x="228" y="613" width="8" height="4" fill="#00b4e6" />
<rect x="268" y="591" width="7" height="5" fill="#00e696" />
<rect x="271" y="593" width="3" height="4" fill="#e8a030" />
<rect x="262" y="595" width="5" height="4" fill="#00b4e6" />
<rect x="251" y="596" width="3" height="2" fill="#1464e6" />
<rect x="255" y="598" width="3" height="2" fill="#1464e6" />
<rect x="262" y="590" width="3" height="2" fill="#00b4e6" />
<rect x="244" y="604" width="3" height="2" fill="#00b4e6" />
<rect x="257" y="589" width="3" height="2" fill="#00b4e6" />
<rect x="266" y="588" width="3" height="2" fill="#00b4e6" />
<rect x="247" y="601" width="3" height="2" fill="#00b4e6" />
<rect x="324" y="483" width="14" height="11" fill="#0b7a50" />
<rect x="333" y="487" width="19" height="12" fill="#0b7a50" />
<rect x="335" y="483" width="3" height="3" fill="#00e696" />
<rect x="346" y="497" width="3" height="2" fill="#00e696" />
<rect x="366" y="494" width="8" height="12" fill="#0b7a50" />
<rect x="370" y="500" width="10" height="12" fill="#0b7a50" />
<rect x="376" y="506" width="12" height="10" fill="#0b7a50" />
<rect x="382" y="512" width="10" height="8" fill="#0b7a50" />
<rect x="374" y="508" width="3" height="2" fill="#00e696" />
<rect x="384" y="518" width="8" height="2" fill="#c4c4c4" />
<rect x="380" y="524" width="11" height="14" fill="#0b7a50" />
<rect x="377" y="538" width="8" height="11" fill="#00e696" />
<rect x="380" y="538" width="5" height="5" fill="#0b7a50" />
<rect x="399" y="524" width="5" height="8" fill="#0b7a50" />
<rect x="402" y="527" width="5" height="5" fill="#c4c4c4" />
<rect x="366" y="560" width="8" height="8" fill="#00e696" />
<rect x="368" y="564" width="6" height="4" fill="#0b7a50" />
<rect x="366" y="576" width="11" height="11" fill="#0b7a50" />
<rect x="385" y="579" width="8" height="3" fill="#00e696" />
<rect x="321" y="556" width="9" height="5" fill="#0b7a50" />
<rect x="324" y="554" width="3" height="3" fill="#00e696" />
<rect x="302" y="557" width="10" height="6" fill="#0b7a50" />
<rect x="302" y="557" width="4" height="4" fill="#00b4e6" />
<rect x="297" y="566" width="6" height="8" fill="#00b4e6" />
<rect x="302" y="565" width="6" height="7" fill="#00e696" />
<rect x="316" y="565" width="7" height="8" fill="#00e696" />
<rect x="323" y="573" width="6" height="7" fill="#00b4e6" />
<rect x="334" y="574" width="8" height="10" fill="#00e696" />
<rect x="316" y="585" width="6" height="7" fill="#00e696" />
<rect x="320" y="584" width="5" height="5" fill="#00b4e6" />
<rect x="310" y="596" width="4" height="4" fill="#00b4e6" />
<rect x="319" y="631" width="8" height="7" fill="#00e696" />
<rect x="322" y="632" width="4" height="4" fill="#c4c4c4" />
<rect x="297" y="612" width="3" height="3" fill="#00b4e6" />
<rect x="291" y="616" width="5" height="4" fill="#1464e6" />
<rect x="180" y="634" width="9" height="4" fill="#00e696" />
<rect x="180" y="638" width="9" height="4" fill="#0b7a50" />
<rect x="197" y="634" width="6" height="6" fill="#00e696" />
<rect x="201" y="638" width="7" height="5" fill="#00e696" />
<rect x="206" y="640" width="7" height="5" fill="#0b7a50" />
<rect x="144" y="656" width="9" height="8" fill="#00e696" />
<rect x="177" y="662" width="6" height="5" fill="#00e696" />
<rect x="175" y="673" width="9" height="11" fill="#0b7a50" />
<rect x="183" y="675" width="8" height="10" fill="#00e696" />
<rect x="144" y="684" width="17" height="9" fill="#0b7a50" />
<rect x="150" y="681" width="10" height="5" fill="#0b7a50" />
<rect x="144" y="690" width="10" height="5" fill="#0b7a50" />
<rect x="122" y="697" width="4" height="6" fill="#0b7a50" />
<rect x="124" y="701" width="4" height="7" fill="#0b7a50" />
<rect x="202" y="661" width="10" height="10" fill="#c4c4c4" />
<rect x="202" y="665" width="4" height="5" fill="#e8a030" />
<rect x="213" y="664" width="14" height="8" fill="#c4c4c4" />
<rect x="214" y="666" width="4" height="4" fill="#e8a030" />
<rect x="198" y="671" width="9" height="13" fill="#00e696" />
<rect x="200" y="673" width="6" height="7" fill="#c4c4c4" />
<rect x="197" y="676" width="4" height="7" fill="#0b7a50" />
<rect x="208" y="676" width="24" height="16" fill="#00e696" />
<rect x="214" y="678" width="16" height="8" fill="#0b7a50" />
<rect x="220" y="680" width="6" height="4" fill="#c4c4c4" />
<rect x="216" y="686" width="8" height="4" fill="#00b4e6" />
<rect x="205" y="700" width="11" height="14" fill="#00e696" />
<rect x="198" y="705" width="7" height="8" fill="#0b7a50" />
<rect x="219" y="708" width="8" height="10" fill="#00e696" />
<rect x="224" y="715" width="9" height="9" fill="#00e696" />
<rect x="241" y="711" width="14" height="11" fill="#0b7a50" />
<rect x="245" y="716" width="8" height="12" fill="#c4c4c4" />
<rect x="250" y="712" width="5" height="6" fill="#00e696" />
<rect x="202" y="722" width="14" height="8" fill="#00e696" />
<rect x="206" y="726" width="8" height="7" fill="#0b7a50" />
<rect x="219" y="728" width="11" height="12" fill="#00e696" />
<rect x="226" y="736" width="15" height="14" fill="#00e696" />
<rect x="230" y="739" width="11" height="9" fill="#c4c4c4" />
<rect x="256" y="744" width="12" height="11" fill="#0b7a50" />
<rect x="258" y="745" width="6" height="5" fill="#00e696" />
<rect x="261" y="749" width="6" height="5" fill="#c4c4c4" />
<rect x="172" y="752" width="14" height="14" fill="#0b7a50" />
<rect x="150" y="739" width="8" height="8" fill="#0b7a50" />
<rect x="211" y="761" width="3" height="7" fill="#0b7a50" />
<rect x="213" y="766" width="6" height="6" fill="#00e696" />
<rect x="223" y="752" width="4" height="8" fill="#00e696" />
<rect x="236" y="664" width="12" height="8" fill="#00b4e6" />
<rect x="240" y="660" width="6" height="6" fill="#00e696" />
<rect x="254" y="662" width="4" height="6" fill="#00b4e6" />
<rect x="262" y="660" width="6" height="6" fill="#00b4e6" />
<rect x="238" y="674" width="18" height="8" fill="#00e696" />
<rect x="244" y="676" width="8" height="4" fill="#0b7a50" />
<rect x="258" y="682" width="14" height="8" fill="#00e696" />
<rect x="246" y="688" width="12" height="8" fill="#00e696" />
<rect x="246" y="690" width="4" height="7" fill="#c4c4c4" />
<rect x="262" y="684" width="6" height="6" fill="#c4c4c4" />
<rect x="258" y="680" width="8" height="5" fill="#e8a030" />
<rect x="236" y="696" width="10" height="8" fill="#00e696" />
<rect x="232" y="700" width="6" height="6" fill="#0b7a50" />
<rect x="240" y="700" width="4" height="4" fill="#c4c4c4" />
<rect x="268" y="686" width="6" height="8" fill="#00b4e6" />
<rect x="228" y="638" width="4" height="4" fill="#1464e6" />
<rect x="222" y="644" width="6" height="4" fill="#00b4e6" />
<rect x="232" y="646" width="6" height="4" fill="#00b4e6" />
<rect x="226" y="652" width="6" height="4" fill="#00e696" />
<rect x="213" y="654" width="5" height="4" fill="#00b4e6" />
<rect x="245" y="655" width="5" height="3" fill="#00b4e6" />
<rect x="250" y="649" width="4" height="3" fill="#1464e6" />
<rect x="316" y="639" width="6" height="5" fill="#00e696" />
<rect x="319" y="641" width="3" height="3" fill="#c4c4c4" />
<rect x="308" y="641" width="4" height="5" fill="#00b4e6" />
<rect x="349" y="659" width="6" height="8" fill="#00e696" />
<rect x="342" y="688" width="10" height="12" fill="#0b7a50" />
<rect x="344" y="684" width="16" height="8" fill="#00e696" />
<rect x="356" y="690" width="10" height="10" fill="#00e696" />
<rect x="358" y="688" width="4" height="8" fill="#0b7a50" />
<rect x="345" y="689" width="12" height="8" fill="#e8a030" />
<rect x="348" y="686" width="9" height="4" fill="#c4c4c4" />
<rect x="308" y="690" width="10" height="8" fill="#0b7a50" />
<rect x="319" y="688" width="11" height="9" fill="#00e696" />
<rect x="328" y="686" width="9" height="8" fill="#0b7a50" />
<rect x="313" y="698" width="11" height="7" fill="#00e696" />
<rect x="330" y="688" width="4" height="4" fill="#00e696" />
<rect x="292" y="684" width="10" height="7" fill="#0b7a50" />
<rect x="296" y="686" width="6" height="3" fill="#00b4e6" />
<rect x="270" y="691" width="12" height="8" fill="#e8a030" />
<rect x="274" y="690" width="8" height="4" fill="#e8a030" />
<rect x="280" y="692" width="10" height="8" fill="#00b4e6" />
<rect x="284" y="694" width="10" height="8" fill="#00e696" />
<rect x="274" y="699" width="6" height="6" fill="#00e696" />
<rect x="286" y="700" width="6" height="5" fill="#00b4e6" />
<rect x="260" y="680" width="8" height="8" fill="#00b4e6" />
<rect x="262" y="684" width="6" height="6" fill="#e8a030" />
<rect x="278" y="682" width="6" height="4" fill="#00b4e6" />
<rect x="272" y="719" width="5" height="5" fill="#00e696" />
<rect x="280" y="726" width="30" height="12" fill="#0b7a50" />
<rect x="298" y="722" width="10" height="8" fill="#0b7a50" />
<rect x="286" y="734" width="16" height="6" fill="#0b7a50" />
<rect x="297" y="728" width="12" height="5" fill="#e8a030" />
<rect x="280" y="730" width="5" height="6" fill="#c4c4c4" />
<rect x="298" y="733" width="5" height="3" fill="#c4c4c4" />
<rect x="290" y="737" width="10" height="3" fill="#00e696" />
<rect x="260" y="745" width="8" height="10" fill="#0b7a50" />
<rect x="261" y="746" width="5" height="8" fill="#c4c4c4" />
<rect x="274" y="750" width="7" height="2" fill="#00e696" />
<rect x="279" y="752" width="4" height="5" fill="#00e696" />
<rect x="333" y="780" width="5" height="3" fill="#0b7a50" />
<rect x="260" y="660" width="4" height="6" fill="#00b4e6" />
<rect x="268" y="664" width="3" height="6" fill="#1464e6" />
<rect x="251" y="610" width="2" height="2" fill="#1464e6" />
<rect x="255" y="618" width="2" height="2" fill="#5a1ee6" />
<rect x="258" y="623" width="2" height="2" fill="#5a1ee6" />
<rect x="251" y="625" width="2" height="2" fill="#1464e6" />
<rect x="262" y="625" width="2" height="2" fill="#8a14f0" />
<rect x="259" y="633" width="2" height="2" fill="#5a1ee6" />
<rect x="257" y="636" width="2" height="2" fill="#1464e6" />
<rect x="254" y="639" width="2" height="2" fill="#1464e6" />
<rect x="262" y="639" width="2" height="2" fill="#5a1ee6" />
<rect x="265" y="641" width="2" height="2" fill="#8a14f0" />
<rect x="270" y="637" width="2" height="2" fill="#5a1ee6" />
<rect x="270" y="640" width="2" height="2" fill="#1464e6" />
<rect x="263" y="643" width="2" height="2" fill="#5a1ee6" />
<rect x="259" y="645" width="2" height="2" fill="#1464e6" />
<rect x="266" y="645" width="2" height="2" fill="#5a1ee6" />
<rect x="281" y="637" width="2" height="2" fill="#5a1ee6" />
<rect x="283" y="639" width="2" height="2" fill="#1464e6" />
<rect x="285" y="641" width="2" height="2" fill="#00b4e6" />
<rect x="289" y="632" width="2" height="2" fill="#1464e6" />
<rect x="289" y="642" width="2" height="2" fill="#1464e6" />
<rect x="292" y="645" width="2" height="2" fill="#00b4e6" />
<rect x="279" y="623" width="2" height="2" fill="#8a14f0" />
<rect x="276" y="616" width="2" height="2" fill="#5a1ee6" />
<rect x="270" y="613" width="2" height="2" fill="#5a1ee6" />
<rect x="272" y="620" width="2" height="2" fill="#8a14f0" />
<rect x="274" y="634" width="2" height="2" fill="#8a14f0" />
<rect x="268" y="631" width="2" height="2" fill="#8a14f0" />
<rect x="280" y="621" width="2" height="2" fill="#5a1ee6" />
<rect x="276" y="644" width="2" height="2" fill="#1464e6" />
<rect x="277" y="647" width="2" height="2" fill="#00b4e6" />
<rect x="275" y="649" width="2" height="2" fill="#1464e6" />
<rect x="278" y="651" width="2" height="2" fill="#00b4e6" />
<rect x="276" y="653" width="2" height="2" fill="#1464e6" />
<rect x="280" y="654" width="2" height="2" fill="#00b4e6" />
<rect x="286" y="619" width="2" height="2" fill="#00b4e6" />
<rect x="288" y="622" width="2" height="2" fill="#1464e6" />
<rect x="293" y="617" width="2" height="2" fill="#00b4e6" />
<rect x="294" y="620" width="2" height="2" fill="#1464e6" />
<rect x="263" y="626" width="2" height="2" fill="#00b4e6" />
<rect x="275" y="643" width="3" height="9" fill="#1464e6" />
<rect x="274" y="646" width="6" height="3" fill="#00b4e6" />
<rect x="286" y="621" width="3" height="3" fill="#00e696" />
<rect x="287" y="622" width="2" height="2" fill="#e8a030" />
<g fill="none" stroke="#fff" stroke-width="1" shape-rendering="crispEdges">
<circle cx="272.5" cy="630.5" r="27.4"/>
<circle cx="272.5" cy="630.5" r="54.9"/>
<circle cx="272.5" cy="630.5" r="82.3"/>
<circle cx="272.5" cy="630.5" r="109.8"/>
<circle cx="272.5" cy="630.5" r="137.2"/>
<circle cx="272.5" cy="630.5" r="164.7"/>
<circle cx="272.5" cy="630.5" r="192.2"/>
<circle cx="272.5" cy="630.5" r="219.6"/>
</g>
<g stroke="#fff" stroke-width="1" shape-rendering="crispEdges">
<line x1="291.91" y1="649.91" x2="427.781" y2="785.781" stroke="#fff" stroke-width="1" />
<line x1="291.91" y1="611.09" x2="427.781" y2="475.219" stroke="#fff" stroke-width="1" />
<line x1="253.09" y1="649.91" x2="117.219" y2="785.781" stroke="#fff" stroke-width="1" />
<line x1="253.09" y1="611.09" x2="117.219" y2="475.219" stroke="#fff" stroke-width="1" />
</g>
</g>
<line x1="55" y1="630.5" x2="245.2" y2="630.5" stroke="#fff" stroke-width="1" />
<line x1="299.8" y1="630.5" x2="487" y2="630.5" stroke="#fff" stroke-width="1" />
<line x1="273.5" y1="458" x2="273.5" y2="603.2" stroke="#fff" stroke-width="1" />
<line x1="273.5" y1="657.8" x2="273.5" y2="795" stroke="#fff" stroke-width="1" />
<circle cx="242.500" cy="464.500" r="7.500" fill="none" stroke="#ffa500" stroke-width="1" shape-rendering="auto"/>
<text x="243" y="479" font-size="6" fill="#ffa500" text-anchor="middle" textLength="22" lengthAdjust="spacingAndGlyphs" >whoi-met</text>
<path d="M268 464.500h11M273.500 459v11" stroke="#f0e68c" stroke-width="1" fill="none"/>
<circle cx="271.500" cy="616.500" r="7.500" fill="none" stroke="#ffa500" stroke-width="1" shape-rendering="auto"/>
<text x="272" y="632" font-size="7" fill="#ffa500" text-anchor="middle" textLength="27" lengthAdjust="spacingAndGlyphs" font-weight="bold" >b&lt;-125-5</text>
<text x="44" y="463" font-size="6" fill="#f0e68c" text-anchor="middle" >10</text>
<text x="271" y="806" font-size="6" fill="#f0e68c" text-anchor="middle" textLength="11" lengthAdjust="spacingAndGlyphs" >-125</text>
<line x1="488" y1="458.5" x2="573" y2="458.5" stroke="#c0c0c0" stroke-width="1" />
<text x="490.5" y="470.8" font-size="18" fill="#fff" textLength="51.5" lengthAdjust="spacingAndGlyphs" >maxdz</text>
<rect x="490" y="485" width="10" height="8" fill="#f98080" />
<rect x="490" y="493" width="10" height="8" fill="#fb8c90" />
<rect x="490" y="501" width="10" height="8" fill="#f9a860" />
<rect x="490" y="509" width="10" height="8" fill="#fcd5b0" />
<rect x="490" y="517" width="10" height="8" fill="#fbdb14" />
<rect x="490" y="525" width="10" height="8" fill="#efb41f" />
<rect x="490" y="533" width="10" height="8" fill="#dc9330" />
<rect x="490" y="541" width="10" height="8" fill="#c4c4c4" />
<rect x="490" y="549" width="10" height="8" fill="#0e7a50" />
<rect x="490" y="557" width="10" height="8" fill="#0ce89a" />
<rect x="490" y="565" width="10" height="8" fill="#0db4e0" />
<rect x="490" y="573" width="10" height="8" fill="#1070e0" />
<rect x="490" y="581" width="10" height="8" fill="#1840e0" />
<rect x="490" y="589" width="10" height="8" fill="#4420e0" />
<rect x="490" y="597" width="10" height="8" fill="#7010f0" />
<rect x="490" y="605" width="10" height="8" fill="#9010f8" />
<text x="505.8" y="493" font-size="18" fill="#fff" textLength="33.5" lengthAdjust="spacingAndGlyphs" >65.0</text>
<text x="505.8" y="517.1" font-size="18" fill="#fff" textLength="33.5" lengthAdjust="spacingAndGlyphs" >50.0</text>
<text x="505.8" y="541.2" font-size="18" fill="#fff" textLength="33.5" lengthAdjust="spacingAndGlyphs" >35.0</text>
<text x="505.8" y="565.3" font-size="18" fill="#fff" textLength="33.5" lengthAdjust="spacingAndGlyphs" >20.0</text>
<text x="505.8" y="589.4" font-size="18" fill="#fff" textLength="24" lengthAdjust="spacingAndGlyphs" >5.0</text>
<text x="505.8" y="613.5" font-size="18" fill="#fff" textLength="46" lengthAdjust="spacingAndGlyphs" >-10.0</text>
<line x1="488" y1="639.5" x2="573" y2="639.5" stroke="#c0c0c0" stroke-width="1" />
<text x="490.5" y="651.8" font-size="18" fill="#fff" textLength="51.5" lengthAdjust="spacingAndGlyphs" >maxdz</text>
<rect x="490" y="666" width="10" height="8" fill="#f98080" />
<rect x="490" y="674" width="10" height="8" fill="#fb8c90" />
<rect x="490" y="682" width="10" height="8" fill="#f9a860" />
<rect x="490" y="690" width="10" height="8" fill="#fcd5b0" />
<rect x="490" y="698" width="10" height="8" fill="#fbdb14" />
<rect x="490" y="706" width="10" height="8" fill="#efb41f" />
<rect x="490" y="714" width="10" height="8" fill="#dc9330" />
<rect x="490" y="722" width="10" height="8" fill="#c4c4c4" />
<rect x="490" y="730" width="10" height="8" fill="#0e7a50" />
<rect x="490" y="738" width="10" height="8" fill="#0ce89a" />
<rect x="490" y="746" width="10" height="8" fill="#0db4e0" />
<rect x="490" y="754" width="10" height="8" fill="#1070e0" />
<rect x="490" y="762" width="10" height="8" fill="#1840e0" />
<rect x="490" y="770" width="10" height="8" fill="#4420e0" />
<rect x="490" y="778" width="10" height="8" fill="#7010f0" />
<rect x="490" y="786" width="10" height="8" fill="#9010f8" />
<text x="505.8" y="674" font-size="18" fill="#fff" textLength="33.5" lengthAdjust="spacingAndGlyphs" >65.0</text>
<text x="505.8" y="698.1" font-size="18" fill="#fff" textLength="33.5" lengthAdjust="spacingAndGlyphs" >50.0</text>
<text x="505.8" y="722.2" font-size="18" fill="#fff" textLength="33.5" lengthAdjust="spacingAndGlyphs" >35.0</text>
<text x="505.8" y="746.3" font-size="18" fill="#fff" textLength="33.5" lengthAdjust="spacingAndGlyphs" >20.0</text>
<text x="505.8" y="770.4" font-size="18" fill="#fff" textLength="24" lengthAdjust="spacingAndGlyphs" >5.0</text>
<text x="505.8" y="794.5" font-size="18" fill="#fff" textLength="46" lengthAdjust="spacingAndGlyphs" >-10.0</text>
<line x1="573.5" y1="388" x2="573.5" y2="870" stroke="#fff" stroke-width="1" stroke-dasharray="1 1"/>
<line x1="572.500" y1="387" x2="572.500" y2="427" stroke="#fff" stroke-width="1" stroke-dasharray="1 1"/>
<text x="381" y="860.5" font-size="24.5" fill="#fff" textLength="181" lengthAdjust="spacingAndGlyphs" >Alt: 0.50 km MSL</text>
<rect x="14" y="871" width="559" height="27" fill="#fff8dc" />
<rect x="0" y="870" width="13" height="28" fill="url(#stip)" />
<rect x="13" y="870" width="1" height="28" fill="#000" />
<clipPath id="cterm"><rect x="14" y="871" width="559" height="27"/></clipPath>
<text x="17" y="878.5" font-size="15" fill="#000" textLength="377" lengthAdjust="spacingAndGlyphs" style='font-family:"Liberation Mono", monospace' clip-path="url(#cterm)">rain:beaufait:98&gt;xdump.all 970817.0705.xwd</text>
<rect x="17.500" y="882.500" width="7" height="12" fill="none" stroke="#228b22" stroke-width="1"/>
<rect x="0" y="898" width="573" height="2" fill="#0000cd" />
<line x1="488" y1="820.5" x2="573" y2="820.5" stroke="#c0c0c0" stroke-width="1" />
<rect x="572" y="0" width="529" height="2" fill="#006400" />
<rect x="735" y="0" width="366" height="1" fill="#000" />
<line x1="735" y1="0.5" x2="1101" y2="0.5" stroke="#fff" stroke-width="1" stroke-dasharray="1 1"/>
<line x1="572" y1="2.5" x2="1133" y2="2.5" stroke="#fff" stroke-width="1" stroke-dasharray="1 1"/>
<line x1="1132.5" y1="2" x2="1132.5" y2="386" stroke="#fff" stroke-width="1" stroke-dasharray="1 1"/>
<text x="583" y="20.5" font-size="18.3" fill="#ff0" textLength="185" lengthAdjust="spacingAndGlyphs" >17-aug-1997,07:05:00</text>
<text x="779" y="20.5" font-size="18.3" fill="#fff" textLength="313" lengthAdjust="spacingAndGlyphs" >Planar cross-section plot.  Contour of</text>
<path d="M622.5 29.5H1048.5V311.5H622.5Z" fill="none" stroke="#fff" stroke-width="1"/>
<line x1="675.5" y1="304" x2="675.5" y2="311" stroke="#fff" stroke-width="1" />
<line x1="675.5" y1="29" x2="675.5" y2="36" stroke="#fff" stroke-width="1" />
<line x1="728.5" y1="304" x2="728.5" y2="311" stroke="#fff" stroke-width="1" />
<line x1="728.5" y1="29" x2="728.5" y2="36" stroke="#fff" stroke-width="1" />
<line x1="782.5" y1="304" x2="782.5" y2="311" stroke="#fff" stroke-width="1" />
<line x1="782.5" y1="29" x2="782.5" y2="36" stroke="#fff" stroke-width="1" />
<line x1="835.5" y1="304" x2="835.5" y2="311" stroke="#fff" stroke-width="1" />
<line x1="835.5" y1="29" x2="835.5" y2="36" stroke="#fff" stroke-width="1" />
<line x1="888.5" y1="304" x2="888.5" y2="311" stroke="#fff" stroke-width="1" />
<line x1="888.5" y1="29" x2="888.5" y2="36" stroke="#fff" stroke-width="1" />
<line x1="942.5" y1="304" x2="942.5" y2="311" stroke="#fff" stroke-width="1" />
<line x1="942.5" y1="29" x2="942.5" y2="36" stroke="#fff" stroke-width="1" />
<line x1="995.5" y1="304" x2="995.5" y2="311" stroke="#fff" stroke-width="1" />
<line x1="995.5" y1="29" x2="995.5" y2="36" stroke="#fff" stroke-width="1" />
<line x1="622" y1="283.5" x2="632" y2="283.5" stroke="#fff" stroke-width="1" />
<line x1="1038" y1="283.5" x2="1048" y2="283.5" stroke="#fff" stroke-width="1" />
<line x1="622" y1="254.5" x2="632" y2="254.5" stroke="#fff" stroke-width="1" />
<line x1="1038" y1="254.5" x2="1048" y2="254.5" stroke="#fff" stroke-width="1" />
<line x1="622" y1="226.5" x2="632" y2="226.5" stroke="#fff" stroke-width="1" />
<line x1="1038" y1="226.5" x2="1048" y2="226.5" stroke="#fff" stroke-width="1" />
<line x1="622" y1="198.5" x2="632" y2="198.5" stroke="#fff" stroke-width="1" />
<line x1="1038" y1="198.5" x2="1048" y2="198.5" stroke="#fff" stroke-width="1" />
<line x1="622" y1="170.5" x2="632" y2="170.5" stroke="#fff" stroke-width="1" />
<line x1="1038" y1="170.5" x2="1048" y2="170.5" stroke="#fff" stroke-width="1" />
<line x1="622" y1="142.5" x2="632" y2="142.5" stroke="#fff" stroke-width="1" />
<line x1="1038" y1="142.5" x2="1048" y2="142.5" stroke="#fff" stroke-width="1" />
<line x1="622" y1="113.5" x2="632" y2="113.5" stroke="#fff" stroke-width="1" />
<line x1="1038" y1="113.5" x2="1048" y2="113.5" stroke="#fff" stroke-width="1" />
<line x1="622" y1="85.5" x2="632" y2="85.5" stroke="#fff" stroke-width="1" />
<line x1="1038" y1="85.5" x2="1048" y2="85.5" stroke="#fff" stroke-width="1" />
<line x1="622" y1="57.5" x2="632" y2="57.5" stroke="#fff" stroke-width="1" />
<line x1="1038" y1="57.5" x2="1048" y2="57.5" stroke="#fff" stroke-width="1" />
<polygon points="623,276 711,276 717,268 717,225 803,225 803,196 897,196 897,236 966,236 966,265 1044,265 1044,299 623,299" fill="#c8c8c8"/>
<polygon points="623,276 653,276 650,299 623,299" fill="#00b0e0"/>
<polygon points="653,276 681,276 678,299 650,299" fill="#00e696"/>
<polygon points="681,276 711,276 713,273 708,299 678,299" fill="#00784a"/>
<polygon points="717,225 782,225 770,229 752,238 740,245 733,250 724,258 717,265" fill="#00784a"/>
<polygon points="717,225 733,225 726,228 717,231" fill="#00e696"/>
<polygon points="803,196 897,196 897,213 880,214 876,212 803,214" fill="#00784a"/>
<polygon points="928,236 966,236 966,244 950,241" fill="#00784a"/>
<polygon points="987,265 1008,265 1011,299 990,299" fill="#00784a"/>
<polygon points="1008,265 1032,265 1036,299 1011,299" fill="#00e696"/>
<polygon points="1032,265 1044,265 1044,299 1036,299" fill="#00b0e0"/>
<polygon points="738,299 740,288 744,277 750,266 757,258 768,252 782,247 800,241 830,239 870,239 897,241 920,247 940,254 955,260 964,265 969,272 972,284 973,299" fill="#da9230"/>
<polygon points="771,299 773,290 777,281 783,272 792,264 801,258 830,255 870,254 900,256 915,259 925,263 934,269 940,277 944,288 945,299" fill="#eeb422"/>
<polygon points="835,299 842,294 850,289 860,286 870,283 877,280 881,278 886,280 892,283 898,287 903,292 906,299" fill="#fada14"/>
<text x="619.5" y="310.5" font-size="10" fill="#fff" text-anchor="end" >0</text>
<text x="619.5" y="254" font-size="10" fill="#fff" text-anchor="end" >4</text>
<text x="619.5" y="197.5" font-size="10" fill="#fff" text-anchor="end" >8</text>
<text x="619.5" y="141" font-size="10" fill="#fff" text-anchor="end" >12</text>
<text x="619.5" y="84.5" font-size="10" fill="#fff" text-anchor="end" >16</text>
<text x="619.5" y="28" font-size="10" fill="#fff" text-anchor="end" >20</text>
<text x="623" y="322" font-size="10.5" fill="#fff" text-anchor="middle" >0.0</text>
<text x="729" y="322" font-size="10.5" fill="#fff" text-anchor="middle" >2.9</text>
<text x="836" y="322" font-size="10.5" fill="#fff" text-anchor="middle" >5.9</text>
<text x="942" y="322" font-size="10.5" fill="#fff" text-anchor="middle" >8.8</text>
<text x="1047" y="322" font-size="10.5" fill="#fff" text-anchor="end" >11</text>
<text x="803" y="331" font-size="10.5" fill="#fff" textLength="66" lengthAdjust="spacingAndGlyphs" >Distance in km</text>
<text x="0" y="0" font-size="14.5" font-weight="bold" fill="#fff" style='font-family:"Liberation Serif", serif;' textLength="62" lengthAdjust="spacingAndGlyphs" transform="translate(603.7,217.3) rotate(-90)">km above</text>
<text x="0" y="0" font-size="13" fill="#fff" textLength="25.500" lengthAdjust="spacing" transform="translate(603.7,148.0) rotate(-90)">MSL</text>
<text x="583" y="47.5" font-size="18.3" fill="#fff" textLength="173" lengthAdjust="spacingAndGlyphs" >maxdz using: rhb_3d.</text>
<line x1="1048" y1="28.5" x2="1132" y2="28.5" stroke="#c0c0c0" stroke-width="1" />
<line x1="1048" y1="335.5" x2="1132" y2="335.5" stroke="#c0c0c0" stroke-width="1" />
<text x="1050.8" y="44" font-size="12.5" fill="#fff" textLength="33.4" lengthAdjust="spacingAndGlyphs" >maxdz</text>
<rect x="1050" y="52" width="10" height="17" fill="#f98080" />
<rect x="1050" y="69" width="10" height="17" fill="#fb8c90" />
<rect x="1050" y="86" width="10" height="17" fill="#f9a860" />
<rect x="1050" y="103" width="10" height="17" fill="#fcd5b0" />
<rect x="1050" y="120" width="10" height="17" fill="#fbdb14" />
<rect x="1050" y="137" width="10" height="17" fill="#efb41f" />
<rect x="1050" y="154" width="10" height="17" fill="#dc9330" />
<rect x="1050" y="171" width="10" height="17" fill="#c4c4c4" />
<rect x="1050" y="188" width="10" height="17" fill="#0e7a50" />
<rect x="1050" y="205" width="10" height="17" fill="#0ce89a" />
<rect x="1050" y="222" width="10" height="17" fill="#0db4e0" />
<rect x="1050" y="239" width="10" height="17" fill="#1070e0" />
<rect x="1050" y="256" width="10" height="17" fill="#1840e0" />
<rect x="1050" y="273" width="10" height="17" fill="#4420e0" />
<rect x="1050" y="290" width="10" height="17" fill="#7010f0" />
<rect x="1050" y="307" width="10" height="17" fill="#9010f8" />
<text x="1065.7" y="64.8" font-size="12.5" fill="#fff" textLength="22.6" lengthAdjust="spacingAndGlyphs" >62.5</text>
<text x="1065.7" y="81.8" font-size="12.5" fill="#fff" textLength="22.6" lengthAdjust="spacingAndGlyphs" >57.5</text>
<text x="1065.7" y="98.8" font-size="12.5" fill="#fff" textLength="22.6" lengthAdjust="spacingAndGlyphs" >52.5</text>
<text x="1065.7" y="115.8" font-size="12.5" fill="#fff" textLength="22.6" lengthAdjust="spacingAndGlyphs" >47.5</text>
<text x="1065.7" y="132.8" font-size="12.5" fill="#fff" textLength="22.6" lengthAdjust="spacingAndGlyphs" >42.5</text>
<text x="1065.7" y="149.8" font-size="12.5" fill="#fff" textLength="22.6" lengthAdjust="spacingAndGlyphs" >37.5</text>
<text x="1065.7" y="166.8" font-size="12.5" fill="#fff" textLength="22.6" lengthAdjust="spacingAndGlyphs" >32.5</text>
<text x="1065.7" y="183.8" font-size="12.5" fill="#fff" textLength="22.6" lengthAdjust="spacingAndGlyphs" >27.5</text>
<text x="1065.7" y="200.8" font-size="12.5" fill="#fff" textLength="22.6" lengthAdjust="spacingAndGlyphs" >22.5</text>
<text x="1065.7" y="217.8" font-size="12.5" fill="#fff" textLength="22.6" lengthAdjust="spacingAndGlyphs" >17.5</text>
<text x="1065.7" y="234.8" font-size="12.5" fill="#fff" textLength="22.6" lengthAdjust="spacingAndGlyphs" >12.5</text>
<text x="1065.7" y="251.8" font-size="12.5" fill="#fff" textLength="16" lengthAdjust="spacingAndGlyphs" >7.5</text>
<text x="1065.7" y="268.8" font-size="12.5" fill="#fff" textLength="16" lengthAdjust="spacingAndGlyphs" >2.5</text>
<text x="1065.7" y="285.8" font-size="12.5" fill="#fff" textLength="24" lengthAdjust="spacingAndGlyphs" >-2.5</text>
<text x="1065.7" y="302.8" font-size="12.5" fill="#fff" textLength="24" lengthAdjust="spacingAndGlyphs" >-7.5</text>
<text x="1065.7" y="319.8" font-size="12.5" fill="#fff" textLength="30.6" lengthAdjust="spacingAndGlyphs" >-12.5</text>
<line x1="572" y1="386.5" x2="1135" y2="386.5" stroke="#fff" stroke-width="1" stroke-dasharray="1 1"/>
<line x1="573.5" y1="388" x2="573.5" y2="771" stroke="#fff" stroke-width="1" stroke-dasharray="1 1"/>
<line x1="1134.5" y1="388" x2="1134.5" y2="771" stroke="#fff" stroke-width="1" stroke-dasharray="1 1"/>
<line x1="573" y1="770.5" x2="1135" y2="770.5" stroke="#fff" stroke-width="1" stroke-dasharray="1 1"/>
<rect x="1135" y="420" width="6" height="286" fill="#f4f4f4" />
<text x="585" y="404.5" font-size="18.3" fill="#ff0" textLength="185" lengthAdjust="spacingAndGlyphs" >17-aug-1997,07:05:00</text>
<text x="781" y="404.5" font-size="18.3" fill="#fff" textLength="313" lengthAdjust="spacingAndGlyphs" >Planar cross-section plot.  Contour of</text>
<path d="M624.5 413.5H1051.5V695.5H624.5Z" fill="none" stroke="#fff" stroke-width="1"/>
<line x1="677.5" y1="688" x2="677.5" y2="695" stroke="#fff" stroke-width="1" />
<line x1="677.5" y1="413" x2="677.5" y2="420" stroke="#fff" stroke-width="1" />
<line x1="731.5" y1="688" x2="731.5" y2="695" stroke="#fff" stroke-width="1" />
<line x1="731.5" y1="413" x2="731.5" y2="420" stroke="#fff" stroke-width="1" />
<line x1="784.5" y1="688" x2="784.5" y2="695" stroke="#fff" stroke-width="1" />
<line x1="784.5" y1="413" x2="784.5" y2="420" stroke="#fff" stroke-width="1" />
<line x1="837.5" y1="688" x2="837.5" y2="695" stroke="#fff" stroke-width="1" />
<line x1="837.5" y1="413" x2="837.5" y2="420" stroke="#fff" stroke-width="1" />
<line x1="891.5" y1="688" x2="891.5" y2="695" stroke="#fff" stroke-width="1" />
<line x1="891.5" y1="413" x2="891.5" y2="420" stroke="#fff" stroke-width="1" />
<line x1="944.5" y1="688" x2="944.5" y2="695" stroke="#fff" stroke-width="1" />
<line x1="944.5" y1="413" x2="944.5" y2="420" stroke="#fff" stroke-width="1" />
<line x1="998.5" y1="688" x2="998.5" y2="695" stroke="#fff" stroke-width="1" />
<line x1="998.5" y1="413" x2="998.5" y2="420" stroke="#fff" stroke-width="1" />
<line x1="624" y1="667.5" x2="634" y2="667.5" stroke="#fff" stroke-width="1" />
<line x1="1041" y1="667.5" x2="1051" y2="667.5" stroke="#fff" stroke-width="1" />
<line x1="624" y1="638.5" x2="634" y2="638.5" stroke="#fff" stroke-width="1" />
<line x1="1041" y1="638.5" x2="1051" y2="638.5" stroke="#fff" stroke-width="1" />
<line x1="624" y1="610.5" x2="634" y2="610.5" stroke="#fff" stroke-width="1" />
<line x1="1041" y1="610.5" x2="1051" y2="610.5" stroke="#fff" stroke-width="1" />
<line x1="624" y1="582.5" x2="634" y2="582.5" stroke="#fff" stroke-width="1" />
<line x1="1041" y1="582.5" x2="1051" y2="582.5" stroke="#fff" stroke-width="1" />
<line x1="624" y1="554.5" x2="634" y2="554.5" stroke="#fff" stroke-width="1" />
<line x1="1041" y1="554.5" x2="1051" y2="554.5" stroke="#fff" stroke-width="1" />
<line x1="624" y1="526.5" x2="634" y2="526.5" stroke="#fff" stroke-width="1" />
<line x1="1041" y1="526.5" x2="1051" y2="526.5" stroke="#fff" stroke-width="1" />
<line x1="624" y1="497.5" x2="634" y2="497.5" stroke="#fff" stroke-width="1" />
<line x1="1041" y1="497.5" x2="1051" y2="497.5" stroke="#fff" stroke-width="1" />
<line x1="624" y1="469.5" x2="634" y2="469.5" stroke="#fff" stroke-width="1" />
<line x1="1041" y1="469.5" x2="1051" y2="469.5" stroke="#fff" stroke-width="1" />
<line x1="624" y1="441.5" x2="634" y2="441.5" stroke="#fff" stroke-width="1" />
<line x1="1041" y1="441.5" x2="1051" y2="441.5" stroke="#fff" stroke-width="1" />
<polygon points="625,660 715,660 719,656 719,609 800,609 805,605 805,580 899,580 899,620 968,620 968,649 1046,649 1046,683 625,683" fill="#a54a08"/>
<polygon points="719,609 780,609 795,617 808,627 817,633 826,641 837,646 845,647 895,649 1046,649 1046,683 837,683 836,676 833,668 830,663 826,659 822,656 817,653 800,650 783,645 762,641 719,641.5" fill="#b4b4b4"/>
<polygon points="813,580 899,580 899,610 880,601 860,591 835,584" fill="#d99560"/>
<text x="621.5" y="694.5" font-size="10" fill="#fff" text-anchor="end" >0</text>
<text x="621.5" y="638" font-size="10" fill="#fff" text-anchor="end" >4</text>
<text x="621.5" y="581.5" font-size="10" fill="#fff" text-anchor="end" >8</text>
<text x="621.5" y="525" font-size="10" fill="#fff" text-anchor="end" >12</text>
<text x="621.5" y="468.5" font-size="10" fill="#fff" text-anchor="end" >16</text>
<text x="621.5" y="412" font-size="10" fill="#fff" text-anchor="end" >20</text>
<text x="625" y="706" font-size="10.5" fill="#fff" text-anchor="middle" >0.0</text>
<text x="731" y="706" font-size="10.5" fill="#fff" text-anchor="middle" >2.9</text>
<text x="838" y="706" font-size="10.5" fill="#fff" text-anchor="middle" >5.9</text>
<text x="944" y="706" font-size="10.5" fill="#fff" text-anchor="middle" >8.8</text>
<text x="1050" y="706" font-size="10.5" fill="#fff" text-anchor="end" >11</text>
<text x="805" y="715" font-size="10.5" fill="#fff" textLength="66" lengthAdjust="spacingAndGlyphs" >Distance in km</text>
<text x="0" y="0" font-size="14.5" font-weight="bold" fill="#fff" style='font-family:"Liberation Serif", serif;' textLength="62" lengthAdjust="spacingAndGlyphs" transform="translate(605.7,601.3) rotate(-90)">km above</text>
<text x="0" y="0" font-size="13" fill="#fff" textLength="25.500" lengthAdjust="spacing" transform="translate(605.7,532.0) rotate(-90)">MSL</text>
<text x="585" y="431.5" font-size="18.3" fill="#fff" textLength="227" lengthAdjust="spacingAndGlyphs" >radialvelocity using: rhb_3d.</text>
<line x1="1050" y1="412.5" x2="1134" y2="412.5" stroke="#c0c0c0" stroke-width="1" />
<line x1="1050" y1="719.5" x2="1134" y2="719.5" stroke="#c0c0c0" stroke-width="1" />
<text x="1052" y="428.5" font-size="12.5" fill="#fff" textLength="74" lengthAdjust="spacingAndGlyphs" >radialvelocity</text>
<rect x="1052" y="436" width="10" height="11" fill="#ff0000" />
<rect x="1052" y="447" width="10" height="11" fill="#d00a0a" />
<rect x="1052" y="458" width="10" height="11" fill="#900808" />
<rect x="1052" y="469" width="10" height="11" fill="#d85a10" />
<rect x="1052" y="480" width="10" height="11" fill="#ff7f10" />
<rect x="1052" y="491" width="10" height="11" fill="#f86060" />
<rect x="1052" y="502" width="10" height="11" fill="#fa8c8c" />
<rect x="1052" y="513" width="10" height="11" fill="#ffbcbc" />
<rect x="1052" y="524" width="10" height="11" fill="#ffff00" />
<rect x="1052" y="535" width="10" height="11" fill="#fbb524" />
<rect x="1052" y="546" width="10" height="11" fill="#d99560" />
<rect x="1052" y="557" width="10" height="11" fill="#a5480a" />
<rect x="1052" y="568" width="10" height="11" fill="#b4b4b4" />
<rect x="1052" y="579" width="10" height="11" fill="#0a5020" />
<rect x="1052" y="590" width="10" height="11" fill="#0a8020" />
<rect x="1052" y="601" width="10" height="11" fill="#10a020" />
<rect x="1052" y="612" width="10" height="11" fill="#00ff30" />
<rect x="1052" y="623" width="10" height="11" fill="#00bfff" />
<rect x="1052" y="634" width="10" height="11" fill="#0a80f5" />
<rect x="1052" y="645" width="10" height="11" fill="#0010d0" />
<rect x="1052" y="656" width="10" height="11" fill="#0820a0" />
<rect x="1052" y="667" width="10" height="11" fill="#000080" />
<rect x="1052" y="678" width="10" height="11" fill="#8c8cc0" />
<rect x="1052" y="689" width="10" height="11" fill="#505078" />
<rect x="1052" y="700" width="10" height="11" fill="#707070" />
<text x="1067.7" y="446.5" font-size="12.5" fill="#fff" textLength="22.2" lengthAdjust="spacingAndGlyphs" >24.0</text>
<text x="1067.7" y="457.5" font-size="12.5" fill="#fff" textLength="22.2" lengthAdjust="spacingAndGlyphs" >22.0</text>
<text x="1067.7" y="468.5" font-size="12.5" fill="#fff" textLength="22.2" lengthAdjust="spacingAndGlyphs" >20.0</text>
<text x="1067.7" y="479.5" font-size="12.5" fill="#fff" textLength="22.2" lengthAdjust="spacingAndGlyphs" >18.0</text>
<text x="1067.7" y="490.5" font-size="12.5" fill="#fff" textLength="22.2" lengthAdjust="spacingAndGlyphs" >16.0</text>
<text x="1067.7" y="501.5" font-size="12.5" fill="#fff" textLength="22.2" lengthAdjust="spacingAndGlyphs" >14.0</text>
<text x="1067.7" y="512.5" font-size="12.5" fill="#fff" textLength="22.2" lengthAdjust="spacingAndGlyphs" >12.0</text>
<text x="1067.7" y="523.5" font-size="12.5" fill="#fff" textLength="22.2" lengthAdjust="spacingAndGlyphs" >10.0</text>
<text x="1067.7" y="534.5" font-size="12.5" fill="#fff" textLength="15.8" lengthAdjust="spacingAndGlyphs" >8.0</text>
<text x="1067.7" y="545.5" font-size="12.5" fill="#fff" textLength="15.8" lengthAdjust="spacingAndGlyphs" >6.0</text>
<text x="1067.7" y="556.5" font-size="12.5" fill="#fff" textLength="15.8" lengthAdjust="spacingAndGlyphs" >4.0</text>
<text x="1067.7" y="567.5" font-size="12.5" fill="#fff" textLength="15.8" lengthAdjust="spacingAndGlyphs" >2.0</text>
<text x="1067.7" y="578.5" font-size="12.5" fill="#fff" textLength="15.8" lengthAdjust="spacingAndGlyphs" >0.0</text>
<text x="1067.7" y="589.5" font-size="12.5" fill="#fff" textLength="24" lengthAdjust="spacingAndGlyphs" >-2.0</text>
<text x="1067.7" y="600.5" font-size="12.5" fill="#fff" textLength="24" lengthAdjust="spacingAndGlyphs" >-4.0</text>
<text x="1067.7" y="611.5" font-size="12.5" fill="#fff" textLength="24" lengthAdjust="spacingAndGlyphs" >-6.0</text>
<text x="1067.7" y="622.5" font-size="12.5" fill="#fff" textLength="24" lengthAdjust="spacingAndGlyphs" >-8.0</text>
<text x="1067.7" y="633.5" font-size="12.5" fill="#fff" textLength="31" lengthAdjust="spacingAndGlyphs" >-10.0</text>
<text x="1067.7" y="644.5" font-size="12.5" fill="#fff" textLength="31" lengthAdjust="spacingAndGlyphs" >-12.0</text>
<text x="1067.7" y="655.5" font-size="12.5" fill="#fff" textLength="31" lengthAdjust="spacingAndGlyphs" >-14.0</text>
<text x="1067.7" y="666.5" font-size="12.5" fill="#fff" textLength="31" lengthAdjust="spacingAndGlyphs" >-16.0</text>
<text x="1067.7" y="677.5" font-size="12.5" fill="#fff" textLength="31" lengthAdjust="spacingAndGlyphs" >-18.0</text>
<text x="1067.7" y="688.5" font-size="12.5" fill="#fff" textLength="31" lengthAdjust="spacingAndGlyphs" >-20.0</text>
<text x="1067.7" y="699.5" font-size="12.5" fill="#fff" textLength="31" lengthAdjust="spacingAndGlyphs" >-22.0</text>
<text x="1067.7" y="710.5" font-size="12.5" fill="#fff" textLength="31" lengthAdjust="spacingAndGlyphs" >-24.0</text>
<rect x="1084" y="776" width="35" height="91" fill="#e4e4e4" />
<rect x="1119" y="775" width="2" height="94" fill="#000" />
<rect x="1084" y="867" width="37" height="2" fill="#000" />
<rect x="1121" y="771" width="4" height="102" fill="#5f9ea0" />
<rect x="573" y="869" width="552" height="4" fill="#5f9ea0" />
<line x1="573" y1="873.5" x2="1126" y2="873.5" stroke="#fff" stroke-width="1" stroke-dasharray="1 1"/>
<line x1="1125.5" y1="771" x2="1125.5" y2="873" stroke="#fff" stroke-width="1" stroke-dasharray="1 1"/>
<rect x="577" y="873" width="496" height="27" fill="#e0e0e0" />
<rect x="573" y="873" width="4" height="27" fill="#5f9ea0" />
<rect x="1073" y="873" width="1" height="27" fill="#000" />
<rect x="1074" y="873" width="5" height="27" fill="#5f9ea0" />
<rect x="1079" y="874" width="55" height="26" fill="#0000cd" />
<rect x="560" y="871" width="13" height="27" fill="#fff8dc" />
<rect x="574" y="771" width="509" height="98" fill="#000" />
<line x1="573.5" y1="771" x2="573.5" y2="869" stroke="#fff" stroke-width="1" stroke-dasharray="1 1"/>
<line x1="1083.5" y1="771" x2="1083.5" y2="869" stroke="#fff" stroke-width="1" stroke-dasharray="1 1"/>
<line x1="573" y1="770.5" x2="1084" y2="770.5" stroke="#fff" stroke-width="1" stroke-dasharray="1 1"/>
<rect x="1045" y="771" width="76" height="4" fill="#ffffff" />
<line x1="1045" y1="775.5" x2="1121" y2="775.5" stroke="#fff" stroke-width="1" stroke-dasharray="1 1"/>
<rect x="1126" y="771" width="8" height="129" fill="#0000cd" />
<rect x="580" y="772.500" width="44.500" height="20.500" fill="#000" stroke="#fff" stroke-width="1.500"/>
<text x="585" y="788" font-size="13" fill="#fff" textLength="35" lengthAdjust="spacingAndGlyphs" >Dismiss</text>
<rect x="574.500" y="797" width="503" height="64.500" fill="none" stroke="#fff" stroke-width="1.600"/>
<text x="577.5" y="811.5" font-size="15" fill="#fff" textLength="369" lengthAdjust="spacingAndGlyphs" style='font-family:"Liberation Mono", monospace' font-weight="bold" >PLATFORM   FIELD      ALTITUDE       TIME</text>
<text x="577.5" y="826.5" font-size="15" fill="#fff" textLength="486" lengthAdjust="spacingAndGlyphs" style='font-family:"Liberation Mono", monospace' font-weight="bold" >rhb_lowprf maxdz      0.50 km MSL    17-Aug-97,7:00:25</text>
<text x="577.5" y="841.5" font-size="15" fill="#fff" textLength="486" lengthAdjust="spacingAndGlyphs" style='font-family:"Liberation Mono", monospace' font-weight="bold" >rhb_3d     maxdz      0.50 km MSL    17-Aug-97,7:01:19</text>
<rect x="579" y="873" width="1" height="27" fill="#000" />
<rect x="585" y="873" width="2" height="27" fill="#000" />
<path d="M591.5 873V895.5H651.5V873" fill="none" stroke="#ff0000" stroke-width="1"/>
<text x="596" y="889.5" font-size="14" fill="#000" textLength="50" lengthAdjust="spacingAndGlyphs" >Real Time</text>
<rect x="657" y="873" width="57" height="23" fill="#000" />
<path d="M657.5 873V895.5H713.5V873" fill="none" stroke="#ff0000" stroke-width="1"/>
<text x="662" y="889.5" font-size="14" fill="#fff" textLength="47" lengthAdjust="spacingAndGlyphs" >Set Time</text>
<rect x="719" y="873" width="2" height="27" fill="#000" />
<path d="M727 873V897H914.500V873" fill="none" stroke="#000" stroke-width="2"/>
<text x="734" y="886" font-size="13.5" fill="#000" textLength="23" lengthAdjust="spacingAndGlyphs" font-weight="bold" >Skip</text>
<path d="M764.500 873V892.500H802.500V873" fill="none" stroke="#ffff00" stroke-width="1.500"/>
<text x="772" y="887" font-size="13" fill="#000" >1</text>
<path d="M773.500 890.500l2-2 2 2" fill="none" stroke="#000" stroke-width="1"/>
<path d="M805.500 873V891.500H856.500V873" fill="none" stroke="#555" stroke-width="1"/>
<rect x="811.500" y="878.500" width="7" height="10" fill="#e0e0e0" stroke="#000" stroke-width="1"/><path d="M813 881.500h4M813 883.500h4M813 885.500h4" stroke="#000" stroke-width="1"/>
<text x="826" y="889" font-size="15.5" fill="#000" textLength="27" lengthAdjust="spacingAndGlyphs" style='font-family:"Liberation Mono", monospace' font-weight="bold" >hrs</text>
<path d="M859.500 873V892.500H884V873" fill="none" stroke="#ff0000" stroke-width="1"/>
<rect x="862" y="873" width="19" height="18" fill="url(#stip)" />
<rect x="864" y="875" width="15" height="14" fill="#e8e8e8" />
<path d="M866 882l5-4v3h6v2h-6v3z" fill="#000"/>
<rect x="885" y="873" width="24" height="22" fill="#000" />
<path d="M885.500 873V895" fill="none" stroke="#ff0000" stroke-width="1"/>
<rect x="888" y="873" width="19" height="18" fill="url(#stip)" />
<rect x="890" y="875" width="15" height="14" fill="#e8e8e8" />
<path d="M903 882l-5-4v3h-6v2h6v3z" fill="#000"/>
<rect x="919" y="873" width="2" height="27" fill="#000" />
<path d="M925.5 873V895.5H956.5V873" fill="none" stroke="#ff0000" stroke-width="1"/>
<text x="930" y="889.5" font-size="14" fill="#000" textLength="22" lengthAdjust="spacingAndGlyphs" >Help</text>
<path d="M962.5 873V895.5H1011.5V873" fill="none" stroke="#ff0000" stroke-width="1"/>
<text x="967" y="889.5" font-size="14" fill="#000" textLength="40" lengthAdjust="spacingAndGlyphs" >Dismiss</text>
<rect x="1018" y="873" width="2" height="27" fill="#000" />
<rect x="5.5" y="376.5" width="45" height="47" fill="#191970" stroke="#909090" stroke-width="1"/>
<g transform="translate(5,376)" shape-rendering="auto"><path d="M7 12.500C10 7.500 15 6.500 20 8.500S30 13.500 38.500 9L6.500 39.500C10 36.500 16 35.500 21 37.500S32 42.500 39.500 35" fill="none" stroke="#ffff00" stroke-width="1.900" stroke-linejoin="miter"/></g>
<rect x="52.5" y="376.5" width="45" height="47" fill="#191970" stroke="#909090" stroke-width="1"/>
<g transform="translate(52,376)">
<text x="3" y="14.5" font-size="14.5" fill="#ffff00" textLength="30" lengthAdjust="spacingAndGlyphs" font-weight="bold" >GOES</text>
<path d="M3 17h5c8 2 14 8 16 16v11H3z" fill="url(#stipy)"/>
<path d="M3 17h5l-5 5z M14 26l5-3 4 6 1 5-6 0-4-4z M3 38c5-3 9-1 9 3v3H3z" fill="#ffff00"/>
<path d="M22 25l17-5M24 33l15-11" stroke="#ffff00" stroke-width="1.200" stroke-dasharray="1 1.500" fill="none" shape-rendering="auto"/>
<path d="M40 18l3 3-3 3-3-3z" fill="#ffff00"/>
<rect x="19" y="16" width="1" height="1" fill="#ffff00" />
<rect x="24" y="19" width="1" height="1" fill="#ffff00" />
<rect x="31" y="19" width="1" height="1" fill="#ffff00" />
<rect x="39" y="29" width="1" height="1" fill="#ffff00" />
<rect x="35" y="31" width="1" height="1" fill="#ffff00" />
<rect x="25" y="44" width="1" height="1" fill="#ffff00" />
<text x="29.5" y="43.5" font-size="9" fill="#ffff00" textLength="9.5" lengthAdjust="spacingAndGlyphs" >IR</text>
</g>
<rect x="99.5" y="376.5" width="45" height="47" fill="#191970" stroke="#909090" stroke-width="1"/>
<g transform="translate(99,376)">
<path d="M5 9C8 20 16 28 28 31" fill="none" stroke="#ffff00" stroke-width="2" shape-rendering="auto"/>
<rect x="12.500" y="20.500" width="4" height="4" fill="none" stroke="#ffff00" stroke-width="1"/>
<path d="M13 24h2.500l1 10v5.500h-8v-5.500h1.500z" fill="#ffff00"/>
<text x="35.7" y="16.5" font-size="13.5" fill="#ffff00" text-anchor="middle" textLength="7" lengthAdjust="spacingAndGlyphs" >S</text>
<text x="35.7" y="28.2" font-size="13.5" fill="#ffff00" text-anchor="middle" textLength="7" lengthAdjust="spacingAndGlyphs" >U</text>
<text x="35.7" y="39.9" font-size="13.5" fill="#ffff00" text-anchor="middle" textLength="7" lengthAdjust="spacingAndGlyphs" >R</text>
</g>
<rect x="146.5" y="376.5" width="45" height="47" fill="#6a6a6a" stroke="#909090" stroke-width="1"/>
<g transform="translate(146,376)">
<path d="M5.500 5.500h36v37h-36zM14.500 5.500v37M23.500 5.500v37M32.500 5.500v37M5.500 14.500h36M5.500 24.500h36M5.500 33.500h36" fill="none" stroke="#d8d8d8" stroke-width="1.300"/>
<path d="M12 9C14 20 22 29 35 31" fill="none" stroke="#d8d8d8" stroke-width="2" shape-rendering="auto"/>
<path d="M19 19l2 0 1 14h1v6h-8v-6h2z" fill="#d8d8d8"/>
</g>
<rect x="193.5" y="376.5" width="13" height="47" fill="#6a6a6a" stroke="#909090" stroke-width="1"/>
<g transform="translate(193,376)">
<text x="7" y="11.5" font-size="6.3" fill="#d8d8d8" text-anchor="middle" font-weight="bold" >B</text>
<text x="7" y="17.4" font-size="6.3" fill="#d8d8d8" text-anchor="middle" font-weight="bold" >O</text>
<text x="7" y="23.3" font-size="6.3" fill="#d8d8d8" text-anchor="middle" font-weight="bold" >U</text>
<text x="7" y="29.2" font-size="6.3" fill="#d8d8d8" text-anchor="middle" font-weight="bold" >N</text>
<text x="7" y="35.1" font-size="6.3" fill="#d8d8d8" text-anchor="middle" font-weight="bold" >D</text>
<text x="7" y="41" font-size="6.3" fill="#d8d8d8" text-anchor="middle" font-weight="bold" >S</text>
</g>
<rect x="208.5" y="400.5" width="21" height="23" fill="#191970" stroke="#909090" stroke-width="1"/>
<path d="M211.5 404.5h16v16h-16zM216.5 404.5v16M222.5 404.5v16M211.5 409.5h16M211.5 415.5h16" fill="none" stroke="#ffff00" stroke-width="1.200"/>
<rect x="231.5" y="376.5" width="20" height="47" fill="#191970" stroke="#909090" stroke-width="1"/>
<g transform="translate(231,376)">
<text x="10.5" y="25" font-size="9.5" fill="#ffff00" text-anchor="middle" >M</text>
<text x="10.5" y="32.7" font-size="9.5" fill="#ffff00" text-anchor="middle" >A</text>
<text x="10.5" y="40.4" font-size="9.5" fill="#ffff00" text-anchor="middle" >P</text>
<path d="M4 5l4-1 1 3-2 3 1 3-3-2-2-4z M11 4l5-1-2 3 2 2 1 3-3-1-2-3z M3 11l2 1-1 2z" fill="#ffff00"/>
</g>
<rect x="253.5" y="376.5" width="20" height="47" fill="#6a6a6a" stroke="#909090" stroke-width="1"/>
<g fill="none" stroke="#d8d8d8" stroke-width="1.200" shape-rendering="auto" transform="translate(263.5 399.5) scale(1 1.250)"><circle r="7.500"/><circle r="5.300"/><circle r="2.700"/><path d="M-7.500 0h4.800M2.700 0h4.800M0 -7.500v4.800M0 2.700v4.800M-5.300 -5.300l3.400 3.400M1.900 1.900l3.400 3.400M-5.300 5.300l3.400 -3.400M1.900 -1.900l3.400 -3.400"/></g>
<rect x="275.5" y="400.5" width="21" height="23" fill="#191970" stroke="#909090" stroke-width="1"/>
<g transform="translate(275,400)"><path d="M9 5h3v1h1v6h1v2H7v-2h1V6h1z M10 14h2v2h-2z" fill="#ffff00"/><path d="M2.500 17.500l1.500 1.500 2-2 2 2 2-2 2 2 2-2 2 2 2-2 1.500 1.500" stroke="#ffff00" stroke-width="1.200" fill="none"/><rect x="7" y="16" width="8" height="1.500" fill="#ffff00"/></g>
<rect x="298.5" y="376.5" width="45" height="47" fill="#6a6a6a" stroke="#909090" stroke-width="1"/>
<g transform="translate(298,376)" shape-rendering="auto"><path d="M6.500 32.500h33l-3 6.500h-26z" fill="none" stroke="#d8d8d8" stroke-width="1.200"/><path d="M8.500 32.500v-8h4l2.500 8" fill="none" stroke="#d8d8d8" stroke-width="1.200"/><circle cx="22.500" cy="23.500" r="3" fill="none" stroke="#d8d8d8" stroke-width="1.200"/><path d="M22.500 26.500v6M34.500 16v16.500" stroke="#d8d8d8" stroke-width="1.300"/><path d="M3 44v-4l2-2 2 2 2-2 2 2 2-2 2 2 2-2 2 2 2-2 2 2 2-2 2 2 2-2 2 2 2-2 2 2 2-2 2 2 1-1v5z" fill="#d8d8d8"/></g>
<rect x="11.5" y="821.5" width="45" height="47" fill="#191970" stroke="#909090" stroke-width="1"/>
<g transform="translate(11,821)" shape-rendering="auto"><path d="M7 12.500C10 7.500 15 6.500 20 8.500S30 13.500 38.500 9L6.500 39.500C10 36.500 16 35.500 21 37.500S32 42.500 39.500 35" fill="none" stroke="#ffff00" stroke-width="1.900" stroke-linejoin="miter"/></g>
<rect x="57.5" y="821.5" width="45" height="47" fill="#6a6a6a" stroke="#909090" stroke-width="1"/>
<g transform="translate(57,821)">
<text x="3" y="14.5" font-size="14.5" fill="#d8d8d8" textLength="30" lengthAdjust="spacingAndGlyphs" font-weight="bold" >GOES</text>
<path d="M3 17h5c8 2 14 8 16 16v11H3z" fill="url(#stipg)"/>
<path d="M3 17h5l-5 5z M14 26l5-3 4 6 1 5-6 0-4-4z M3 38c5-3 9-1 9 3v3H3z" fill="#d8d8d8"/>
<path d="M22 25l17-5M24 33l15-11" stroke="#d8d8d8" stroke-width="1.200" stroke-dasharray="1 1.500" fill="none" shape-rendering="auto"/>
<path d="M40 18l3 3-3 3-3-3z" fill="#d8d8d8"/>
<rect x="19" y="16" width="1" height="1" fill="#d8d8d8" />
<rect x="24" y="19" width="1" height="1" fill="#d8d8d8" />
<rect x="31" y="19" width="1" height="1" fill="#d8d8d8" />
<rect x="39" y="29" width="1" height="1" fill="#d8d8d8" />
<rect x="35" y="31" width="1" height="1" fill="#d8d8d8" />
<rect x="25" y="44" width="1" height="1" fill="#d8d8d8" />
<text x="29.5" y="43.5" font-size="9" fill="#d8d8d8" textLength="9.5" lengthAdjust="spacingAndGlyphs" >IR</text>
</g>
<rect x="104.5" y="821.5" width="45" height="47" fill="#191970" stroke="#909090" stroke-width="1"/>
<g transform="translate(104,821)">
<path d="M5 9C8 20 16 28 28 31" fill="none" stroke="#ffff00" stroke-width="2" shape-rendering="auto"/>
<rect x="12.500" y="20.500" width="4" height="4" fill="none" stroke="#ffff00" stroke-width="1"/>
<path d="M13 24h2.500l1 10v5.500h-8v-5.500h1.500z" fill="#ffff00"/>
<text x="35.7" y="16.5" font-size="13.5" fill="#ffff00" text-anchor="middle" textLength="7" lengthAdjust="spacingAndGlyphs" >S</text>
<text x="35.7" y="28.2" font-size="13.5" fill="#ffff00" text-anchor="middle" textLength="7" lengthAdjust="spacingAndGlyphs" >U</text>
<text x="35.7" y="39.9" font-size="13.5" fill="#ffff00" text-anchor="middle" textLength="7" lengthAdjust="spacingAndGlyphs" >R</text>
</g>
<rect x="151.5" y="821.5" width="45" height="47" fill="#191970" stroke="#909090" stroke-width="1"/>
<g transform="translate(151,821)">
<path d="M5.500 5.500h36v37h-36zM14.500 5.500v37M23.500 5.500v37M32.500 5.500v37M5.500 14.500h36M5.500 24.500h36M5.500 33.500h36" fill="none" stroke="#ffff00" stroke-width="1.300"/>
<path d="M12 9C14 20 22 29 35 31" fill="none" stroke="#ffff00" stroke-width="2" shape-rendering="auto"/>
<path d="M19 19l2 0 1 14h1v6h-8v-6h2z" fill="#ffff00"/>
</g>
<rect x="198.5" y="821.5" width="13" height="47" fill="#191970" stroke="#909090" stroke-width="1"/>
<g transform="translate(198,821)">
<text x="7" y="11.5" font-size="6.3" fill="#ffff00" text-anchor="middle" font-weight="bold" >B</text>
<text x="7" y="17.4" font-size="6.3" fill="#ffff00" text-anchor="middle" font-weight="bold" >O</text>
<text x="7" y="23.3" font-size="6.3" fill="#ffff00" text-anchor="middle" font-weight="bold" >U</text>
<text x="7" y="29.2" font-size="6.3" fill="#ffff00" text-anchor="middle" font-weight="bold" >N</text>
<text x="7" y="35.1" font-size="6.3" fill="#ffff00" text-anchor="middle" font-weight="bold" >D</text>
<text x="7" y="41" font-size="6.3" fill="#ffff00" text-anchor="middle" font-weight="bold" >S</text>
</g>
<rect x="213.5" y="845.5" width="21" height="23" fill="#191970" stroke="#909090" stroke-width="1"/>
<path d="M216.5 849.5h16v16h-16zM221.5 849.5v16M227.5 849.5v16M216.5 854.5h16M216.5 860.5h16" fill="none" stroke="#ffff00" stroke-width="1.200"/>
<rect x="236.5" y="821.5" width="20" height="47" fill="#191970" stroke="#909090" stroke-width="1"/>
<g transform="translate(236,821)">
<text x="10.5" y="25" font-size="9.5" fill="#ffff00" text-anchor="middle" >M</text>
<text x="10.5" y="32.7" font-size="9.5" fill="#ffff00" text-anchor="middle" >A</text>
<text x="10.5" y="40.4" font-size="9.5" fill="#ffff00" text-anchor="middle" >P</text>
<path d="M4 5l4-1 1 3-2 3 1 3-3-2-2-4z M11 4l5-1-2 3 2 2 1 3-3-1-2-3z M3 11l2 1-1 2z" fill="#ffff00"/>
</g>
<rect x="258.5" y="821.5" width="20" height="47" fill="#191970" stroke="#909090" stroke-width="1"/>
<g fill="none" stroke="#ffff00" stroke-width="1.200" shape-rendering="auto" transform="translate(268.5 844.5) scale(1 1.250)"><circle r="7.500"/><circle r="5.300"/><circle r="2.700"/><path d="M-7.500 0h4.800M2.700 0h4.800M0 -7.500v4.800M0 2.700v4.800M-5.300 -5.300l3.400 3.400M1.900 1.900l3.400 3.400M-5.300 5.300l3.400 -3.400M1.900 -1.900l3.400 -3.400"/></g>
<rect x="280.5" y="845.5" width="21" height="23" fill="#191970" stroke="#909090" stroke-width="1"/>
<circle cx="291" cy="857.5" r="6.500" fill="none" stroke="#ffff00" stroke-width="1.200" shape-rendering="auto"/>
<rect x="303.5" y="821.5" width="45" height="47" fill="#6a6a6a" stroke="#909090" stroke-width="1"/>
<g transform="translate(303,821)" shape-rendering="auto"><path d="M6.500 32.500h33l-3 6.500h-26z" fill="none" stroke="#d8d8d8" stroke-width="1.200"/><path d="M8.500 32.500v-8h4l2.500 8" fill="none" stroke="#d8d8d8" stroke-width="1.200"/><circle cx="22.500" cy="23.500" r="3" fill="none" stroke="#d8d8d8" stroke-width="1.200"/><path d="M22.500 26.500v6M34.500 16v16.500" stroke="#d8d8d8" stroke-width="1.300"/><path d="M3 44v-4l2-2 2 2 2-2 2 2 2-2 2 2 2-2 2 2 2-2 2 2 2-2 2 2 2-2 2 2 2-2 2 2 2-2 2 2 1-1v5z" fill="#d8d8d8"/></g>
<rect x="577.5" y="336.5" width="45" height="47" fill="#191970" stroke="#909090" stroke-width="1"/>
<g transform="translate(577,336)" shape-rendering="auto"><path d="M7 12.500C10 7.500 15 6.500 20 8.500S30 13.500 38.500 9L6.500 39.500C10 36.500 16 35.500 21 37.500S32 42.500 39.500 35" fill="none" stroke="#ffff00" stroke-width="1.900" stroke-linejoin="miter"/></g>
<rect x="624.5" y="336.5" width="45" height="47" fill="#191970" stroke="#909090" stroke-width="1"/>
<g transform="translate(624,336)">
<text x="23" y="9.3" font-size="7.2" fill="#ffff00" text-anchor="middle" textLength="24" lengthAdjust="spacingAndGlyphs" font-weight="bold" >CROSS</text>
<text x="23" y="44.3" font-size="7.2" fill="#ffff00" text-anchor="middle" textLength="30" lengthAdjust="spacingAndGlyphs" font-weight="bold" >SECTION</text>
<rect x="13" y="13" width="22" height="21" fill="url(#stipy)"/>
<path d="M4.500 17.500h22v21h-22zM20.500 10.500h20v20.500M4.500 17.500l16-7M26.500 17.500l14-7M26.500 38.500l14-7.500M13.500 13.500h21.500v20.500" fill="none" stroke="#ffff00" stroke-width="1"/>
</g>
<rect x="671.5" y="336.5" width="45" height="47" fill="#6a6a6a" stroke="#909090" stroke-width="1"/>
<g transform="translate(671,336)">
<text x="23" y="9.3" font-size="7.2" fill="#d8d8d8" text-anchor="middle" textLength="24" lengthAdjust="spacingAndGlyphs" font-weight="bold" >CROSS</text>
<text x="23" y="44.3" font-size="7.2" fill="#d8d8d8" text-anchor="middle" textLength="30" lengthAdjust="spacingAndGlyphs" font-weight="bold" >SECTION</text>
<rect x="13" y="13" width="22" height="21" fill="url(#stipg)"/>
<path d="M4.500 17.500h22v21h-22zM20.500 10.500h20v20.500M4.500 17.500l16-7M26.500 17.500l14-7M26.500 38.500l14-7.500M13.500 13.500h21.500v20.500" fill="none" stroke="#d8d8d8" stroke-width="1"/>
</g>
<rect x="718.5" y="336.5" width="45" height="47" fill="#6a6a6a" stroke="#909090" stroke-width="1"/>
<g transform="translate(718,336)">
<text x="23" y="9.3" font-size="7.2" fill="#d8d8d8" text-anchor="middle" textLength="24" lengthAdjust="spacingAndGlyphs" font-weight="bold" >CROSS</text>
<text x="23" y="44.3" font-size="7.2" fill="#d8d8d8" text-anchor="middle" textLength="30" lengthAdjust="spacingAndGlyphs" font-weight="bold" >SECTION</text>
<rect x="13" y="13" width="22" height="21" fill="url(#stipg)"/>
<path d="M4.500 17.500h22v21h-22zM20.500 10.500h20v20.500M4.500 17.500l16-7M26.500 17.500l14-7M26.500 38.500l14-7.500M13.500 13.500h21.500v20.500" fill="none" stroke="#d8d8d8" stroke-width="1"/>
</g>
<rect x="579.5" y="720.5" width="45" height="47" fill="#191970" stroke="#909090" stroke-width="1"/>
<g transform="translate(579,720)" shape-rendering="auto"><path d="M7 12.500C10 7.500 15 6.500 20 8.500S30 13.500 38.500 9L6.500 39.500C10 36.500 16 35.500 21 37.500S32 42.500 39.500 35" fill="none" stroke="#ffff00" stroke-width="1.900" stroke-linejoin="miter"/></g>
<rect x="626.5" y="720.5" width="45" height="47" fill="#191970" stroke="#909090" stroke-width="1"/>
<g transform="translate(626,720)">
<text x="23" y="9.3" font-size="7.2" fill="#ffff00" text-anchor="middle" textLength="24" lengthAdjust="spacingAndGlyphs" font-weight="bold" >CROSS</text>
<text x="23" y="44.3" font-size="7.2" fill="#ffff00" text-anchor="middle" textLength="30" lengthAdjust="spacingAndGlyphs" font-weight="bold" >SECTION</text>
<rect x="13" y="13" width="22" height="21" fill="url(#stipy)"/>
<path d="M4.500 17.500h22v21h-22zM20.500 10.500h20v20.500M4.500 17.500l16-7M26.500 17.500l14-7M26.500 38.500l14-7.500M13.500 13.500h21.500v20.500" fill="none" stroke="#ffff00" stroke-width="1"/>
</g>
<rect x="673.5" y="720.5" width="45" height="47" fill="#6a6a6a" stroke="#909090" stroke-width="1"/>
<g transform="translate(673,720)">
<text x="23" y="9.3" font-size="7.2" fill="#d8d8d8" text-anchor="middle" textLength="24" lengthAdjust="spacingAndGlyphs" font-weight="bold" >CROSS</text>
<text x="23" y="44.3" font-size="7.2" fill="#d8d8d8" text-anchor="middle" textLength="30" lengthAdjust="spacingAndGlyphs" font-weight="bold" >SECTION</text>
<rect x="13" y="13" width="22" height="21" fill="url(#stipg)"/>
<path d="M4.500 17.500h22v21h-22zM20.500 10.500h20v20.500M4.500 17.500l16-7M26.500 17.500l14-7M26.500 38.500l14-7.500M13.500 13.500h21.500v20.500" fill="none" stroke="#d8d8d8" stroke-width="1"/>
</g>
<rect x="720.5" y="720.5" width="45" height="47" fill="#6a6a6a" stroke="#909090" stroke-width="1"/>
<g transform="translate(720,720)">
<text x="23" y="9.3" font-size="7.2" fill="#d8d8d8" text-anchor="middle" textLength="24" lengthAdjust="spacingAndGlyphs" font-weight="bold" >CROSS</text>
<text x="23" y="44.3" font-size="7.2" fill="#d8d8d8" text-anchor="middle" textLength="30" lengthAdjust="spacingAndGlyphs" font-weight="bold" >SECTION</text>
<rect x="13" y="13" width="22" height="21" fill="url(#stipg)"/>
<path d="M4.500 17.500h22v21h-22zM20.500 10.500h20v20.500M4.500 17.500l16-7M26.500 17.500l14-7M26.500 38.500l14-7.500M13.500 13.500h21.500v20.500" fill="none" stroke="#d8d8d8" stroke-width="1"/>
</g>
</svg></body></html>
